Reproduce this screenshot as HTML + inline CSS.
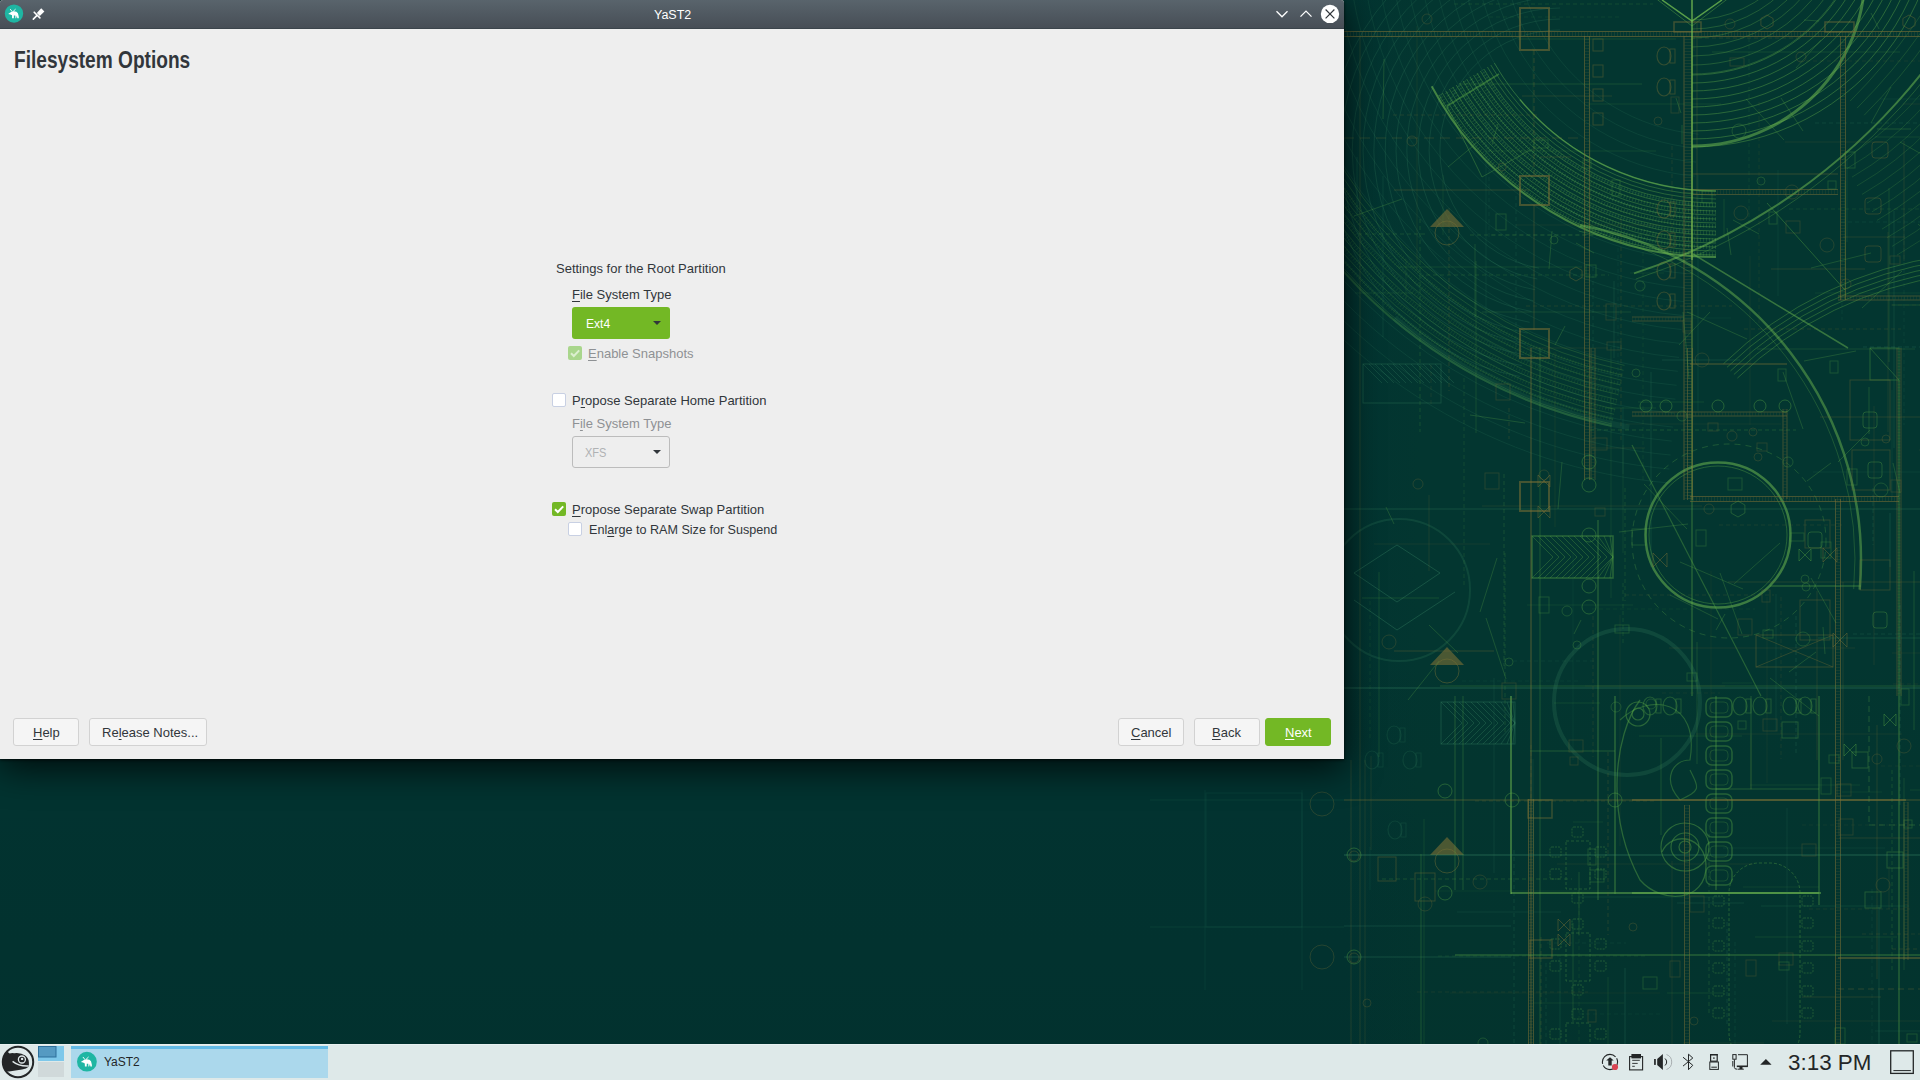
<!DOCTYPE html>
<html><head><meta charset="utf-8">
<style>
html,body{margin:0;padding:0;width:1920px;height:1080px;overflow:hidden;background:#02302c;font-family:"Liberation Sans",sans-serif;}
.abs{position:absolute;}
#desk{position:absolute;left:0;top:0;width:1920px;height:1080px;background:linear-gradient(180deg,rgba(0,0,0,0) 0px,rgba(0,0,0,0) 600px,rgba(0,8,6,0.06) 1044px),linear-gradient(90deg,#023431 0px,#023431 1344px,#033630 1420px,#033630 1920px);}
#win{position:absolute;left:0;top:0;width:1344px;height:759px;background:#eeeeee;border-top-right-radius:3px;border-top-left-radius:3px;box-shadow:0 1px 3px rgba(0,0,0,0.7),0 8px 36px rgba(0,0,0,0.8);}
#tb{position:absolute;left:0;top:0;width:1344px;height:28px;background:linear-gradient(#59646c,#474e56);border-top-right-radius:3px;border-top-left-radius:3px;border-bottom:1px solid #3b444b;}
.t{position:absolute;white-space:nowrap;font-size:13px;line-height:16px;color:#31363b;}
.dis{color:#8e9194;}
#win > .t{margin-top:1px;}
#tb .t{margin-top:1px;}
u{text-decoration:underline;text-underline-offset:2px;text-decoration-thickness:1px;}
.btn{position:absolute;top:718px;height:26px;background:#f5f5f5;border:1px solid #d2d2d2;border-radius:3px;}
.cb{position:absolute;width:12px;height:12px;border:1px solid #c8d0e3;border-radius:2px;background:#fff;}
</style></head><body>
<div id="desk"><svg width="1920" height="1044" viewBox="0 0 1920 1044" style="position:absolute;left:0;top:0"><path d="M1539.2 268.2A120 120 0 0 1 1560.0 30.0" fill="none" stroke="#3b8a66" stroke-width="1" opacity="0.22"/><path d="M1537.3 279.0A131 131 0 0 1 1560.0 19.0" fill="none" stroke="#3b8a66" stroke-width="1" opacity="0.22"/><path d="M1535.3 289.8A142 142 0 0 1 1560.0 8.0" fill="none" stroke="#3b8a66" stroke-width="1" opacity="0.22"/><path d="M1533.4 300.7A153 153 0 0 1 1560.0 -3.0" fill="none" stroke="#3b8a66" stroke-width="1" opacity="0.22"/><path d="M1531.5 311.5A164 164 0 0 1 1560.0 -14.0" fill="none" stroke="#3b8a66" stroke-width="1" opacity="0.22"/><path d="M1529.6 322.3A175 175 0 0 1 1560.0 -25.0" fill="none" stroke="#3b8a66" stroke-width="1" opacity="0.22"/><path d="M1527.7 333.2A186 186 0 0 1 1560.0 -36.0" fill="none" stroke="#3b8a66" stroke-width="1" opacity="0.22"/><path d="M1525.8 344.0A197 197 0 0 1 1560.0 -47.0" fill="none" stroke="#3b8a66" stroke-width="1" opacity="0.22"/><path d="M1523.9 354.8A208 208 0 0 1 1560.0 -58.0" fill="none" stroke="#3b8a66" stroke-width="1" opacity="0.22"/><path d="M1522.0 365.7A219 219 0 0 1 1560.0 -69.0" fill="none" stroke="#3b8a66" stroke-width="1" opacity="0.22"/><path d="M1520.1 376.5A230 230 0 0 1 1560.0 -80.0" fill="none" stroke="#3b8a66" stroke-width="1" opacity="0.22"/><path d="M1698.6 134.2A200 200 0 0 1 1528.1 -133.4" fill="none" stroke="#3b8a66" stroke-width="1" opacity="0.16"/><path d="M1697.3 148.2A214 214 0 0 1 1514.9 -138.2" fill="none" stroke="#3b8a66" stroke-width="1" opacity="0.16"/><path d="M1696.1 162.1A228 228 0 0 1 1501.8 -143.0" fill="none" stroke="#3b8a66" stroke-width="1" opacity="0.16"/><path d="M1694.9 176.1A242 242 0 0 1 1488.6 -147.8" fill="none" stroke="#3b8a66" stroke-width="1" opacity="0.16"/><path d="M1693.7 190.0A256 256 0 0 1 1475.4 -152.6" fill="none" stroke="#3b8a66" stroke-width="1" opacity="0.16"/><path d="M1692.5 204.0A270 270 0 0 1 1462.3 -157.3" fill="none" stroke="#3b8a66" stroke-width="1" opacity="0.16"/><path d="M1691.2 217.9A284 284 0 0 1 1449.1 -162.1" fill="none" stroke="#3b8a66" stroke-width="1" opacity="0.16"/><path d="M1690.0 231.9A298 298 0 0 1 1436.0 -166.9" fill="none" stroke="#3b8a66" stroke-width="1" opacity="0.16"/><path d="M1688.8 245.8A312 312 0 0 1 1422.8 -171.7" fill="none" stroke="#3b8a66" stroke-width="1" opacity="0.16"/><path d="M1687.6 259.8A326 326 0 0 1 1409.7 -176.5" fill="none" stroke="#3b8a66" stroke-width="1" opacity="0.16"/><path d="M1686.4 273.7A340 340 0 0 1 1396.5 -181.3" fill="none" stroke="#3b8a66" stroke-width="1" opacity="0.16"/><path d="M1685.1 287.7A354 354 0 0 1 1383.3 -186.1" fill="none" stroke="#3b8a66" stroke-width="1" opacity="0.16"/><path d="M1683.9 301.6A368 368 0 0 1 1370.2 -190.9" fill="none" stroke="#3b8a66" stroke-width="1" opacity="0.16"/><path d="M1682.7 315.5A382 382 0 0 1 1357.0 -195.7" fill="none" stroke="#3b8a66" stroke-width="1" opacity="0.16"/><path d="M1681.5 329.5A396 396 0 0 1 1343.9 -200.4" fill="none" stroke="#3b8a66" stroke-width="1" opacity="0.16"/><path d="M1680.3 343.4A410 410 0 0 1 1330.7 -205.2" fill="none" stroke="#3b8a66" stroke-width="1" opacity="0.16"/><path d="M1679.0 357.4A424 424 0 0 1 1317.6 -210.0" fill="none" stroke="#3b8a66" stroke-width="1" opacity="0.16"/><path d="M1677.8 371.3A438 438 0 0 1 1304.4 -214.8" fill="none" stroke="#3b8a66" stroke-width="1" opacity="0.16"/><path d="M1676.6 385.3A452 452 0 0 1 1291.3 -219.6" fill="none" stroke="#3b8a66" stroke-width="1" opacity="0.16"/><path d="M1675.4 399.2A466 466 0 0 1 1278.1 -224.4" fill="none" stroke="#3b8a66" stroke-width="1" opacity="0.16"/><path d="M1674.2 413.2A480 480 0 0 1 1264.9 -229.2" fill="none" stroke="#3b8a66" stroke-width="1" opacity="0.16"/><path d="M1672.9 427.1A494 494 0 0 1 1251.8 -234.0" fill="none" stroke="#3b8a66" stroke-width="1" opacity="0.16"/><path d="M1671.7 441.1A508 508 0 0 1 1238.6 -238.7" fill="none" stroke="#3b8a66" stroke-width="1" opacity="0.16"/><path d="M1670.5 455.0A522 522 0 0 1 1225.5 -243.5" fill="none" stroke="#3b8a66" stroke-width="1" opacity="0.16"/><path d="M1669.3 469.0A536 536 0 0 1 1212.3 -248.3" fill="none" stroke="#3b8a66" stroke-width="1" opacity="0.16"/><path d="M1668.1 482.9A550 550 0 0 1 1199.2 -253.1" fill="none" stroke="#3b8a66" stroke-width="1" opacity="0.16"/><path d="M1716.0 191.0A256 256 0 0 1 1494.3 63.0" fill="none" stroke="#58a444" stroke-width="1" opacity="0.42"/><path d="M1716.0 195.0A260 260 0 0 1 1490.8 65.0" fill="none" stroke="#58a444" stroke-width="1" opacity="0.42"/><path d="M1716.0 199.0A264 264 0 0 1 1487.4 67.0" fill="none" stroke="#58a444" stroke-width="1" opacity="0.42"/><path d="M1716.0 203.0A268 268 0 0 1 1483.9 69.0" fill="none" stroke="#58a444" stroke-width="1" opacity="0.42"/><path d="M1716.0 207.0A272 272 0 0 1 1480.4 71.0" fill="none" stroke="#58a444" stroke-width="1" opacity="0.42"/><path d="M1716.0 211.0A276 276 0 0 1 1477.0 73.0" fill="none" stroke="#58a444" stroke-width="1" opacity="0.42"/><path d="M1716.0 215.0A280 280 0 0 1 1473.5 75.0" fill="none" stroke="#58a444" stroke-width="1" opacity="0.42"/><path d="M1716.0 219.0A284 284 0 0 1 1470.0 77.0" fill="none" stroke="#58a444" stroke-width="1" opacity="0.42"/><path d="M1716.0 223.0A288 288 0 0 1 1466.6 79.0" fill="none" stroke="#58a444" stroke-width="1" opacity="0.42"/><path d="M1716.0 227.0A292 292 0 0 1 1463.1 81.0" fill="none" stroke="#58a444" stroke-width="1" opacity="0.42"/><path d="M1716.0 231.0A296 296 0 0 1 1459.7 83.0" fill="none" stroke="#58a444" stroke-width="1" opacity="0.42"/><path d="M1716.0 235.0A300 300 0 0 1 1456.2 85.0" fill="none" stroke="#58a444" stroke-width="1" opacity="0.42"/><path d="M1716.0 239.0A304 304 0 0 1 1452.7 87.0" fill="none" stroke="#58a444" stroke-width="1" opacity="0.42"/><path d="M1716.0 243.0A308 308 0 0 1 1449.3 89.0" fill="none" stroke="#58a444" stroke-width="1" opacity="0.42"/><path d="M1716.0 247.0A312 312 0 0 1 1445.8 91.0" fill="none" stroke="#58a444" stroke-width="1" opacity="0.42"/><path d="M1716.0 251.0A316 316 0 0 1 1442.3 93.0" fill="none" stroke="#58a444" stroke-width="1" opacity="0.42"/><path d="M1716.0 255.0A320 320 0 0 1 1438.9 95.0" fill="none" stroke="#58a444" stroke-width="1" opacity="0.42"/><path d="M1716.0 257.0A322 322 0 0 1 1431.7 86.2" fill="none" stroke="#76c152" stroke-width="2" opacity="0.55"/><path d="M1716.0 191.0A256 256 0 0 1 1519.9 99.6" fill="none" stroke="#76c152" stroke-width="1.5" opacity="0.45"/><path d="M1716.0 205.0A270 270 0 0 1 1482.2 70.0" fill="none" stroke="#76c152" stroke-width="4" opacity="0.18" stroke-dasharray="1 2"/><path d="M1716.0 212.0A277 277 0 0 1 1476.1 73.5" fill="none" stroke="#76c152" stroke-width="4" opacity="0.18" stroke-dasharray="1 2"/><path d="M1716.0 219.0A284 284 0 0 1 1470.0 77.0" fill="none" stroke="#76c152" stroke-width="4" opacity="0.18" stroke-dasharray="1 2"/><path d="M1716.0 226.0A291 291 0 0 1 1464.0 80.5" fill="none" stroke="#76c152" stroke-width="4" opacity="0.18" stroke-dasharray="1 2"/><path d="M1716.0 233.0A298 298 0 0 1 1457.9 84.0" fill="none" stroke="#76c152" stroke-width="4" opacity="0.18" stroke-dasharray="1 2"/><path d="M1716.0 240.0A305 305 0 0 1 1451.9 87.5" fill="none" stroke="#76c152" stroke-width="4" opacity="0.18" stroke-dasharray="1 2"/><path d="M1716.0 247.0A312 312 0 0 1 1445.8 91.0" fill="none" stroke="#76c152" stroke-width="4" opacity="0.18" stroke-dasharray="1 2"/><path d="M1716.0 254.0A319 319 0 0 1 1439.7 94.5" fill="none" stroke="#76c152" stroke-width="4" opacity="0.18" stroke-dasharray="1 2"/><path d="M1447 106L1499 74" fill="none" stroke="#58a444" stroke-width="1.5" opacity="0.5"/><path d="M1447 106L1482 177" fill="none" stroke="#58a444" stroke-width="1" opacity="0.4"/><path d="M1482 177L1530 150" fill="none" stroke="#58a444" stroke-width="1" opacity="0.35"/><path d="M1624.5 365.4A440 440 0 0 1 1285.6 26.5" fill="none" stroke="#58a444" stroke-width="1" opacity="0.25"/><path d="M1623.5 370.3A445 445 0 0 1 1280.7 27.5" fill="none" stroke="#58a444" stroke-width="1" opacity="0.25"/><path d="M1622.4 375.2A450 450 0 0 1 1275.8 28.6" fill="none" stroke="#58a444" stroke-width="1" opacity="0.25"/><path d="M1621.4 380.1A455 455 0 0 1 1270.9 29.6" fill="none" stroke="#58a444" stroke-width="1" opacity="0.25"/><path d="M1620.4 384.9A460 460 0 0 1 1266.1 30.6" fill="none" stroke="#58a444" stroke-width="1" opacity="0.25"/><path d="M1619.3 389.8A465 465 0 0 1 1261.2 31.7" fill="none" stroke="#58a444" stroke-width="1" opacity="0.25"/><path d="M1618.3 394.7A470 470 0 0 1 1256.3 32.7" fill="none" stroke="#58a444" stroke-width="1" opacity="0.25"/><path d="M1617.2 399.6A475 475 0 0 1 1251.4 33.8" fill="none" stroke="#58a444" stroke-width="1" opacity="0.25"/><path d="M1616.2 404.5A480 480 0 0 1 1246.5 34.8" fill="none" stroke="#58a444" stroke-width="1" opacity="0.25"/><path d="M1615.2 409.4A485 485 0 0 1 1241.6 35.8" fill="none" stroke="#58a444" stroke-width="1" opacity="0.25"/><path d="M1614.1 414.3A490 490 0 0 1 1236.7 36.9" fill="none" stroke="#58a444" stroke-width="1" opacity="0.25"/><path d="M1613.1 419.2A495 495 0 0 1 1231.8 37.9" fill="none" stroke="#58a444" stroke-width="1" opacity="0.25"/><path d="M1612.0 424.1A500 500 0 0 1 1226.9 39.0" fill="none" stroke="#58a444" stroke-width="1" opacity="0.25"/><path d="M1611.6 426.0A502 502 0 0 1 1225.0 39.4" fill="none" stroke="#58a444" stroke-width="2" opacity="0.3"/><path d="M1622.4 375.2A450 450 0 0 1 1275.8 28.6" fill="none" stroke="#58a444" stroke-width="4" opacity="0.12" stroke-dasharray="1 2"/><path d="M1620.6 384.0A459 459 0 0 1 1267.0 30.4" fill="none" stroke="#58a444" stroke-width="4" opacity="0.12" stroke-dasharray="1 2"/><path d="M1618.7 392.8A468 468 0 0 1 1258.2 32.3" fill="none" stroke="#58a444" stroke-width="4" opacity="0.12" stroke-dasharray="1 2"/><path d="M1616.8 401.6A477 477 0 0 1 1249.4 34.2" fill="none" stroke="#58a444" stroke-width="4" opacity="0.12" stroke-dasharray="1 2"/><path d="M1615.0 410.4A486 486 0 0 1 1240.6 36.0" fill="none" stroke="#58a444" stroke-width="4" opacity="0.12" stroke-dasharray="1 2"/><path d="M1613.1 419.2A495 495 0 0 1 1231.8 37.9" fill="none" stroke="#58a444" stroke-width="4" opacity="0.12" stroke-dasharray="1 2"/><path d="M1856.4 -159.9A175 175 0 0 1 1692.0 75.0" fill="none" stroke="#58a444" stroke-width="1" opacity="0.45"/><path d="M1864.0 -162.6A183 183 0 0 1 1692.0 83.0" fill="none" stroke="#58a444" stroke-width="1" opacity="0.45"/><path d="M1871.5 -165.3A191 191 0 0 1 1692.0 91.0" fill="none" stroke="#58a444" stroke-width="1" opacity="0.45"/><path d="M1879.0 -168.1A199 199 0 0 1 1692.0 99.0" fill="none" stroke="#58a444" stroke-width="1" opacity="0.45"/><path d="M1886.5 -170.8A207 207 0 0 1 1692.0 107.0" fill="none" stroke="#58a444" stroke-width="1" opacity="0.45"/><path d="M1894.0 -173.5A215 215 0 0 1 1692.0 115.0" fill="none" stroke="#58a444" stroke-width="1" opacity="0.45"/><path d="M1901.6 -176.3A223 223 0 0 1 1692.0 123.0" fill="none" stroke="#58a444" stroke-width="1" opacity="0.45"/><path d="M1909.1 -179.0A231 231 0 0 1 1692.0 131.0" fill="none" stroke="#58a444" stroke-width="1" opacity="0.45"/><path d="M1916.6 -181.7A239 239 0 0 1 1692.0 139.0" fill="none" stroke="#58a444" stroke-width="1" opacity="0.45"/><path d="M1924.1 -184.5A247 247 0 0 1 1692.0 147.0" fill="none" stroke="#58a444" stroke-width="1" opacity="0.45"/><path d="M1810.2 -120.8A120 120 0 0 1 1692.0 20.0" fill="none" stroke="#58a444" stroke-width="1" opacity="0.35"/><path d="M1819.0 -122.4A129 129 0 0 1 1692.0 29.0" fill="none" stroke="#58a444" stroke-width="1" opacity="0.35"/><path d="M1827.9 -124.0A138 138 0 0 1 1692.0 38.0" fill="none" stroke="#58a444" stroke-width="1" opacity="0.35"/><path d="M1836.8 -125.5A147 147 0 0 1 1692.0 47.0" fill="none" stroke="#58a444" stroke-width="1" opacity="0.35"/><path d="M1845.6 -127.1A156 156 0 0 1 1692.0 56.0" fill="none" stroke="#58a444" stroke-width="1" opacity="0.35"/><path d="M1854.5 -128.7A165 165 0 0 1 1692.0 65.0" fill="none" stroke="#58a444" stroke-width="1" opacity="0.35"/><path d="M1863.4 -130.2A174 174 0 0 1 1692.0 74.0" fill="none" stroke="#58a444" stroke-width="1" opacity="0.35"/><path d="M1990.9 -126.1A300 300 0 0 1 1842.0 159.8" fill="none" stroke="#58a444" stroke-width="1" opacity="0.22"/><path d="M2000.8 -127.0A310 310 0 0 1 1847.0 168.5" fill="none" stroke="#58a444" stroke-width="1" opacity="0.22"/><path d="M2010.8 -127.9A320 320 0 0 1 1852.0 177.1" fill="none" stroke="#58a444" stroke-width="1" opacity="0.22"/><path d="M2020.7 -128.8A330 330 0 0 1 1857.0 185.8" fill="none" stroke="#58a444" stroke-width="1" opacity="0.22"/><path d="M2030.7 -129.6A340 340 0 0 1 1862.0 194.4" fill="none" stroke="#58a444" stroke-width="1" opacity="0.22"/><path d="M2040.7 -130.5A350 350 0 0 1 1867.0 203.1" fill="none" stroke="#58a444" stroke-width="1" opacity="0.22"/><path d="M2050.6 -131.4A360 360 0 0 1 1872.0 211.8" fill="none" stroke="#58a444" stroke-width="1" opacity="0.22"/><path d="M2060.6 -132.2A370 370 0 0 1 1877.0 220.4" fill="none" stroke="#58a444" stroke-width="1" opacity="0.22"/><path d="M2070.6 -133.1A380 380 0 0 1 1882.0 229.1" fill="none" stroke="#58a444" stroke-width="1" opacity="0.22"/><path d="M2080.5 -134.0A390 390 0 0 1 1887.0 237.7" fill="none" stroke="#58a444" stroke-width="1" opacity="0.22"/><path d="M2090.5 -134.9A400 400 0 0 1 1892.0 246.4" fill="none" stroke="#58a444" stroke-width="1" opacity="0.22"/><path d="M2100.4 -135.7A410 410 0 0 1 1897.0 255.1" fill="none" stroke="#58a444" stroke-width="1" opacity="0.22"/><path d="M1854.6 -86.2A173 173 0 0 1 1692.0 146.0" fill="none" stroke="#76c152" stroke-width="3" opacity="0.5"/><path d="M2038.8 -176.2A605 605 0 0 1 1634.0 273.4" fill="none" stroke="#76c152" stroke-width="2" opacity="0.5"/><path d="M2044.6 -175.0A611 611 0 0 1 1635.8 279.1" fill="none" stroke="#58a444" stroke-width="1" opacity="0.35"/><path d="M1963.6 -61.1A570 570 0 0 1 1850.1 101.1" fill="none" stroke="#58a444" stroke-width="1" opacity="0.25"/><path d="M1972.7 -56.9A580 580 0 0 1 1857.1 108.1" fill="none" stroke="#58a444" stroke-width="1" opacity="0.25"/><path d="M1981.7 -52.7A590 590 0 0 1 1864.2 115.2" fill="none" stroke="#58a444" stroke-width="1" opacity="0.25"/><path d="M1737.4 378.1A378 378 0 0 1 1947.4 275.7" fill="none" stroke="#58a444" stroke-width="1" opacity="0.4"/><path d="M1733.9 374.5A383 383 0 0 1 1946.7 270.7" fill="none" stroke="#58a444" stroke-width="1" opacity="0.4"/><path d="M1730.5 370.9A388 388 0 0 1 1946.0 265.8" fill="none" stroke="#58a444" stroke-width="1" opacity="0.4"/><path d="M1727.0 367.3A393 393 0 0 1 1945.3 260.8" fill="none" stroke="#58a444" stroke-width="1" opacity="0.4"/><path d="M1723.5 363.7A398 398 0 0 1 1944.6 255.9" fill="none" stroke="#58a444" stroke-width="1" opacity="0.4"/><path d="M1693 254L1848 348" fill="none" stroke="#76c152" stroke-width="1.5" opacity="0.45"/><path d="M1767 203L1845 290" fill="none" stroke="#58a444" stroke-width="1" opacity="0.4"/><path d="M1662 0L1692 21L1722 0" fill="none" stroke="#76c152" stroke-width="1.5" opacity="0.75"/><path d="M1650 -6L1692 26L1734 -6" fill="none" stroke="#58a444" stroke-width="1" opacity="0.45"/><rect x="1674" y="22" width="27" height="10" fill="none" stroke="#7b7035" stroke-width="1.5" opacity="0.5"/><rect x="1825" y="22" width="29" height="10" fill="none" stroke="#7b7035" stroke-width="1.5" opacity="0.5"/><polygon points="1773.1,25.5 1767.0,29.0 1760.9,25.5 1760.9,18.5 1767.0,15.0 1773.1,18.5" fill="none" stroke="#7b7035" stroke-width="1" opacity="0.4"/><polygon points="1915.1,25.5 1909.0,29.0 1902.9,25.5 1902.9,18.5 1909.0,15.0 1915.1,18.5" fill="none" stroke="#7b7035" stroke-width="1" opacity="0.4"/><polygon points="1582.1,277.5 1576.0,281.0 1569.9,277.5 1569.9,270.5 1576.0,267.0 1582.1,270.5" fill="none" stroke="#7b7035" stroke-width="1" opacity="0.4"/><path d="M1344 31.5L1920 31.5" fill="none" stroke="#7b7035" stroke-width="1" opacity="0.6"/><path d="M1344 36.5L1920 36.5" fill="none" stroke="#7b7035" stroke-width="1" opacity="0.6"/><path d="M1344 34L1920 34" fill="none" stroke="#7b7035" stroke-width="4" opacity="0.18" stroke-dasharray="1 2"/><path d="M1684.0 36L1684.0 500" fill="none" stroke="#7b7035" stroke-width="1" opacity="0.6"/><path d="M1692.0 36L1692.0 500" fill="none" stroke="#7b7035" stroke-width="1" opacity="0.6"/><path d="M1688 36L1688 500" fill="none" stroke="#7b7035" stroke-width="7" opacity="0.18" stroke-dasharray="1 2"/><path d="M1692 0L1692 260" fill="none" stroke="#76c152" stroke-width="2" opacity="0.6"/><path d="M1692 260L1692 696" fill="none" stroke="#58a444" stroke-width="1.5" opacity="0.4"/><path d="M1840.5 36L1840.5 300" fill="none" stroke="#7b7035" stroke-width="1" opacity="0.55"/><path d="M1845.5 36L1845.5 300" fill="none" stroke="#7b7035" stroke-width="1" opacity="0.55"/><path d="M1843 36L1843 300" fill="none" stroke="#7b7035" stroke-width="4" opacity="0.165" stroke-dasharray="1 2"/><path d="M1693 189.5L1838 189.5" fill="none" stroke="#7b7035" stroke-width="1" opacity="0.5"/><path d="M1693 194.5L1838 194.5" fill="none" stroke="#7b7035" stroke-width="1" opacity="0.5"/><path d="M1693 192L1838 192" fill="none" stroke="#7b7035" stroke-width="4" opacity="0.15" stroke-dasharray="1 2"/><path d="M1693 174L1838 174" fill="none" stroke="#7b7035" stroke-width="1" opacity="0.4"/><path d="M1838 296.0L1920 296.0" fill="none" stroke="#7b7035" stroke-width="1" opacity="0.5"/><path d="M1838 300.0L1920 300.0" fill="none" stroke="#7b7035" stroke-width="1" opacity="0.5"/><path d="M1838 298L1920 298" fill="none" stroke="#7b7035" stroke-width="3" opacity="0.15" stroke-dasharray="1 2"/><path d="M1632 317.0L1683 317.0" fill="none" stroke="#7b7035" stroke-width="1" opacity="0.45"/><path d="M1632 321.0L1683 321.0" fill="none" stroke="#7b7035" stroke-width="1" opacity="0.45"/><path d="M1632 319L1683 319" fill="none" stroke="#7b7035" stroke-width="3" opacity="0.135" stroke-dasharray="1 2"/><path d="M1584.5 36L1584.5 480" fill="none" stroke="#7b7035" stroke-width="1" opacity="0.55"/><path d="M1589.5 36L1589.5 480" fill="none" stroke="#7b7035" stroke-width="1" opacity="0.55"/><path d="M1587 36L1587 480" fill="none" stroke="#7b7035" stroke-width="4" opacity="0.165" stroke-dasharray="1 2"/><path d="M1534 50L1534 175" fill="none" stroke="#7b7035" stroke-width="1" opacity="0.35" stroke-dasharray="5 3"/><path d="M1534 205L1534 330" fill="none" stroke="#7b7035" stroke-width="1" opacity="0.35"/><path d="M1360 36L1360 1044" fill="none" stroke="#7b7035" stroke-width="1" opacity="0.25"/><path d="M1344 138L1580 138" fill="none" stroke="#7b7035" stroke-width="1" opacity="0.3" stroke-dasharray="10 6"/><path d="M1394 190L1530 190" fill="none" stroke="#7b7035" stroke-width="1" opacity="0.35"/><rect x="1520" y="8" width="29" height="42" fill="none" stroke="#7b7035" stroke-width="2" opacity="0.55"/><rect x="1520" y="176" width="29" height="29" fill="none" stroke="#7b7035" stroke-width="2" opacity="0.55"/><rect x="1520" y="329" width="29" height="29" fill="none" stroke="#7b7035" stroke-width="2" opacity="0.55"/><rect x="1520" y="482" width="29" height="29" fill="none" stroke="#7b7035" stroke-width="2" opacity="0.55"/><rect x="1593" y="39" width="10" height="12" fill="none" stroke="#7b7035" stroke-width="1" opacity="0.4"/><rect x="1593" y="65" width="10" height="12" fill="none" stroke="#7b7035" stroke-width="1" opacity="0.4"/><rect x="1593" y="89" width="10" height="12" fill="none" stroke="#7b7035" stroke-width="1" opacity="0.4"/><rect x="1593" y="113" width="10" height="12" fill="none" stroke="#7b7035" stroke-width="1" opacity="0.4"/><ellipse cx="1664" cy="56" rx="7" ry="9" fill="none" stroke="#7b7035" stroke-width="1.2" opacity="0.4"/><rect x="1670" y="49" width="5" height="14" fill="none" stroke="#7b7035" stroke-width="1" opacity="0.4"/><ellipse cx="1664" cy="87" rx="7" ry="9" fill="none" stroke="#7b7035" stroke-width="1.2" opacity="0.4"/><rect x="1670" y="80" width="5" height="14" fill="none" stroke="#7b7035" stroke-width="1" opacity="0.4"/><ellipse cx="1664" cy="209" rx="7" ry="9" fill="none" stroke="#7b7035" stroke-width="1.2" opacity="0.4"/><rect x="1670" y="202" width="5" height="14" fill="none" stroke="#7b7035" stroke-width="1" opacity="0.4"/><ellipse cx="1664" cy="240" rx="7" ry="9" fill="none" stroke="#7b7035" stroke-width="1.2" opacity="0.4"/><rect x="1670" y="233" width="5" height="14" fill="none" stroke="#7b7035" stroke-width="1" opacity="0.4"/><ellipse cx="1664" cy="271" rx="7" ry="9" fill="none" stroke="#7b7035" stroke-width="1.2" opacity="0.4"/><rect x="1670" y="264" width="5" height="14" fill="none" stroke="#7b7035" stroke-width="1" opacity="0.4"/><ellipse cx="1664" cy="301" rx="7" ry="9" fill="none" stroke="#7b7035" stroke-width="1.2" opacity="0.4"/><rect x="1670" y="294" width="5" height="14" fill="none" stroke="#7b7035" stroke-width="1" opacity="0.4"/><rect x="1865" y="198" width="16" height="16" rx="3" fill="none" stroke="#7b7035" stroke-width="1" opacity="0.35"/><rect x="1865" y="246" width="16" height="16" rx="3" fill="none" stroke="#7b7035" stroke-width="1" opacity="0.35"/><rect x="1872" y="142" width="16" height="16" rx="3" fill="none" stroke="#7b7035" stroke-width="1" opacity="0.35"/><circle cx="1718" cy="535" r="72.5" fill="none" stroke="#76c152" stroke-width="2.5" opacity="0.5"/><circle cx="1718" cy="535" r="69" fill="none" stroke="#58a444" stroke-width="1" opacity="0.4"/><circle cx="1729" cy="541" r="97" fill="none" stroke="#58a444" stroke-width="1" opacity="0.3" stroke-dasharray="6 5"/><path d="M1580.0 225.2A340 340 0 0 1 1859.7 589.6" fill="none" stroke="#76c152" stroke-width="2.5" opacity="0.45"/><path d="M1579.0 231.1A334 334 0 0 1 1853.7 589.1" fill="none" stroke="#58a444" stroke-width="1" opacity="0.3"/><path d="M1632 445L1761 696" fill="none" stroke="#58a444" stroke-width="1.2" opacity="0.4"/><path d="M1687.5 348L1687.5 500" fill="none" stroke="#7b7035" stroke-width="1" opacity="0.5"/><path d="M1692.5 348L1692.5 500" fill="none" stroke="#7b7035" stroke-width="1" opacity="0.5"/><path d="M1690 348L1690 500" fill="none" stroke="#7b7035" stroke-width="4" opacity="0.15" stroke-dasharray="1 2"/><path d="M1690 496.5L1899 496.5" fill="none" stroke="#7b7035" stroke-width="1" opacity="0.55"/><path d="M1690 501.5L1899 501.5" fill="none" stroke="#7b7035" stroke-width="1" opacity="0.55"/><path d="M1690 499L1899 499" fill="none" stroke="#7b7035" stroke-width="4" opacity="0.165" stroke-dasharray="1 2"/><path d="M1783.0 409L1783.0 499" fill="none" stroke="#7b7035" stroke-width="1" opacity="0.5"/><path d="M1787.0 409L1787.0 499" fill="none" stroke="#7b7035" stroke-width="1" opacity="0.5"/><path d="M1785 409L1785 499" fill="none" stroke="#7b7035" stroke-width="3" opacity="0.15" stroke-dasharray="1 2"/><path d="M1632 412.0L1787 412.0" fill="none" stroke="#7b7035" stroke-width="1" opacity="0.5"/><path d="M1632 416.0L1787 416.0" fill="none" stroke="#7b7035" stroke-width="1" opacity="0.5"/><path d="M1632 414L1787 414" fill="none" stroke="#7b7035" stroke-width="3" opacity="0.15" stroke-dasharray="1 2"/><path d="M1690 364L1787 364" fill="none" stroke="#7b7035" stroke-width="1.5" opacity="0.45"/><path d="M1835.5 499L1835.5 1044" fill="none" stroke="#7b7035" stroke-width="1" opacity="0.55"/><path d="M1840.5 499L1840.5 1044" fill="none" stroke="#7b7035" stroke-width="1" opacity="0.55"/><path d="M1838 499L1838 1044" fill="none" stroke="#7b7035" stroke-width="4" opacity="0.165" stroke-dasharray="1 2"/><path d="M1899 380L1899 1044" fill="none" stroke="#58a444" stroke-width="1.5" opacity="0.4"/><path d="M1770 586L1861 586" fill="none" stroke="#58a444" stroke-width="1.5" opacity="0.4"/><path d="M1344 688L1920 688" fill="none" stroke="#3b8a66" stroke-width="1.5" opacity="0.3"/><rect x="1756" y="635" width="77" height="32" fill="none" stroke="#7b7035" stroke-width="1" opacity="0.4"/><path d="M1756 635L1833 667" fill="none" stroke="#7b7035" stroke-width="1" opacity="0.35"/><path d="M1756 667L1833 635" fill="none" stroke="#7b7035" stroke-width="1" opacity="0.35"/><rect x="1870" y="348" width="29" height="32" fill="none" stroke="#58a444" stroke-width="1" opacity="0.4"/><path d="M1870 348L1899 380" fill="none" stroke="#58a444" stroke-width="1" opacity="0.35"/><circle cx="1646" cy="406" r="6" fill="none" stroke="#58a444" stroke-width="1" opacity="0.4"/><circle cx="1666" cy="406" r="6" fill="none" stroke="#58a444" stroke-width="1" opacity="0.4"/><circle cx="1718" cy="406" r="6" fill="none" stroke="#58a444" stroke-width="1" opacity="0.4"/><circle cx="1760" cy="406" r="6" fill="none" stroke="#58a444" stroke-width="1" opacity="0.4"/><circle cx="1785" cy="406" r="6" fill="none" stroke="#58a444" stroke-width="1" opacity="0.4"/><polygon points="1744.9,513.0 1738.0,517.0 1731.1,513.0 1731.1,505.0 1738.0,501.0 1744.9,505.0" fill="none" stroke="#58a444" stroke-width="1" opacity="0.35"/><path d="M1823 548L1837 562L1837 548L1823 562Z" fill="none" stroke="#7b7035" stroke-width="1" opacity="0.45"/><path d="M1653 553L1667 567L1667 553L1653 567Z" fill="none" stroke="#7b7035" stroke-width="1" opacity="0.45"/><path d="M1833 633L1847 647L1847 633L1833 647Z" fill="none" stroke="#7b7035" stroke-width="1" opacity="0.45"/><path d="M1897.0 348L1897.0 696" fill="none" stroke="#7b7035" stroke-width="1" opacity="0.45"/><path d="M1901.0 348L1901.0 696" fill="none" stroke="#7b7035" stroke-width="1" opacity="0.45"/><path d="M1899 348L1899 696" fill="none" stroke="#7b7035" stroke-width="3" opacity="0.135" stroke-dasharray="1 2"/><rect x="1850" y="380" width="40" height="60" fill="none" stroke="#7b7035" stroke-width="1" opacity="0.35"/><rect x="1852" y="450" width="38" height="40" fill="none" stroke="#7b7035" stroke-width="1" opacity="0.35"/><rect x="1800" y="600" width="30" height="40" fill="none" stroke="#7b7035" stroke-width="1" opacity="0.35"/><rect x="1860" y="560" width="30" height="30" fill="none" stroke="#7b7035" stroke-width="1" opacity="0.35"/><rect x="1805" y="520" width="25" height="28" fill="none" stroke="#7b7035" stroke-width="1" opacity="0.35"/><rect x="1863" y="412" width="14" height="16" rx="3" fill="none" stroke="#58a444" stroke-width="1" opacity="0.35"/><rect x="1868" y="462" width="14" height="16" rx="3" fill="none" stroke="#58a444" stroke-width="1" opacity="0.35"/><rect x="1808" y="532" width="14" height="16" rx="3" fill="none" stroke="#58a444" stroke-width="1" opacity="0.35"/><rect x="1873" y="612" width="14" height="16" rx="3" fill="none" stroke="#58a444" stroke-width="1" opacity="0.35"/><rect x="1363" y="364" width="78" height="39" fill="none" stroke="#3b8a66" stroke-width="1" opacity="0.3"/><path d="M1363 364L1382 383" fill="none" stroke="#3b8a66" stroke-width="1" opacity="0.25"/><path d="M1369 364L1388 383" fill="none" stroke="#3b8a66" stroke-width="1" opacity="0.25"/><path d="M1375 364L1394 383" fill="none" stroke="#3b8a66" stroke-width="1" opacity="0.25"/><path d="M1381 364L1400 383" fill="none" stroke="#3b8a66" stroke-width="1" opacity="0.25"/><path d="M1387 364L1406 383" fill="none" stroke="#3b8a66" stroke-width="1" opacity="0.25"/><path d="M1393 364L1412 383" fill="none" stroke="#3b8a66" stroke-width="1" opacity="0.25"/><path d="M1399 364L1418 383" fill="none" stroke="#3b8a66" stroke-width="1" opacity="0.25"/><path d="M1405 364L1424 383" fill="none" stroke="#3b8a66" stroke-width="1" opacity="0.25"/><path d="M1411 364L1430 383" fill="none" stroke="#3b8a66" stroke-width="1" opacity="0.25"/><path d="M1417 364L1436 383" fill="none" stroke="#3b8a66" stroke-width="1" opacity="0.25"/><path d="M1423 364L1442 383" fill="none" stroke="#3b8a66" stroke-width="1" opacity="0.25"/><path d="M1429 364L1448 383" fill="none" stroke="#3b8a66" stroke-width="1" opacity="0.25"/><path d="M1435 364L1454 383" fill="none" stroke="#3b8a66" stroke-width="1" opacity="0.25"/><rect x="1532" y="536" width="81" height="42" fill="none" stroke="#58a444" stroke-width="1.5" opacity="0.45"/><path d="M1532 536L1553 557" fill="none" stroke="#58a444" stroke-width="1" opacity="0.32"/><path d="M1553 557L1532 578" fill="none" stroke="#58a444" stroke-width="1" opacity="0.32"/><path d="M1538 536L1559 557" fill="none" stroke="#58a444" stroke-width="1" opacity="0.32"/><path d="M1559 557L1538 578" fill="none" stroke="#58a444" stroke-width="1" opacity="0.32"/><path d="M1544 536L1565 557" fill="none" stroke="#58a444" stroke-width="1" opacity="0.32"/><path d="M1565 557L1544 578" fill="none" stroke="#58a444" stroke-width="1" opacity="0.32"/><path d="M1550 536L1571 557" fill="none" stroke="#58a444" stroke-width="1" opacity="0.32"/><path d="M1571 557L1550 578" fill="none" stroke="#58a444" stroke-width="1" opacity="0.32"/><path d="M1556 536L1577 557" fill="none" stroke="#58a444" stroke-width="1" opacity="0.32"/><path d="M1577 557L1556 578" fill="none" stroke="#58a444" stroke-width="1" opacity="0.32"/><path d="M1562 536L1583 557" fill="none" stroke="#58a444" stroke-width="1" opacity="0.32"/><path d="M1583 557L1562 578" fill="none" stroke="#58a444" stroke-width="1" opacity="0.32"/><path d="M1568 536L1589 557" fill="none" stroke="#58a444" stroke-width="1" opacity="0.32"/><path d="M1589 557L1568 578" fill="none" stroke="#58a444" stroke-width="1" opacity="0.32"/><path d="M1574 536L1595 557" fill="none" stroke="#58a444" stroke-width="1" opacity="0.32"/><path d="M1595 557L1574 578" fill="none" stroke="#58a444" stroke-width="1" opacity="0.32"/><path d="M1580 536L1601 557" fill="none" stroke="#58a444" stroke-width="1" opacity="0.32"/><path d="M1601 557L1580 578" fill="none" stroke="#58a444" stroke-width="1" opacity="0.32"/><path d="M1586 536L1607 557" fill="none" stroke="#58a444" stroke-width="1" opacity="0.32"/><path d="M1607 557L1586 578" fill="none" stroke="#58a444" stroke-width="1" opacity="0.32"/><path d="M1592 536L1613 557" fill="none" stroke="#58a444" stroke-width="1" opacity="0.32"/><path d="M1613 557L1592 578" fill="none" stroke="#58a444" stroke-width="1" opacity="0.32"/><path d="M1598 536L1613 557" fill="none" stroke="#58a444" stroke-width="1" opacity="0.32"/><path d="M1613 557L1598 578" fill="none" stroke="#58a444" stroke-width="1" opacity="0.32"/><path d="M1604 536L1613 557" fill="none" stroke="#58a444" stroke-width="1" opacity="0.32"/><path d="M1613 557L1604 578" fill="none" stroke="#58a444" stroke-width="1" opacity="0.32"/><path d="M1610 536L1613 557" fill="none" stroke="#58a444" stroke-width="1" opacity="0.32"/><path d="M1613 557L1610 578" fill="none" stroke="#58a444" stroke-width="1" opacity="0.32"/><path d="M1397 545L1440 573L1397 602L1354 573Z" fill="none" stroke="#3b8a66" stroke-width="1" opacity="0.35"/><path d="M1354 600L1397 630L1455 592" fill="none" stroke="#3b8a66" stroke-width="1" opacity="0.35"/><circle cx="1399" cy="590" r="71" fill="none" stroke="#3b8a66" stroke-width="2" opacity="0.2"/><path d="M1629.2 427.4A500 500 0 0 1 1394.6 318.0" fill="none" stroke="#3b8a66" stroke-width="6" opacity="0.15"/><path d="M1531 348L1531 1044" fill="none" stroke="#7b7035" stroke-width="1.5" opacity="0.45"/><path d="M1540 348L1540 1044" fill="none" stroke="#58a444" stroke-width="1" opacity="0.3"/><path d="M1591.0 348L1591.0 480" fill="none" stroke="#7b7035" stroke-width="1" opacity="0.45"/><path d="M1595.0 348L1595.0 480" fill="none" stroke="#7b7035" stroke-width="1" opacity="0.45"/><path d="M1593 348L1593 480" fill="none" stroke="#7b7035" stroke-width="3" opacity="0.135" stroke-dasharray="1 2"/><path d="M1598 520L1598 900" fill="none" stroke="#58a444" stroke-width="1.5" opacity="0.35"/><path d="M1344 509L1920 509" fill="none" stroke="#3b8a66" stroke-width="1.2" opacity="0.3"/><circle cx="1589" cy="462" r="7" fill="none" stroke="#58a444" stroke-width="1" opacity="0.4"/><circle cx="1589" cy="485" r="7" fill="none" stroke="#58a444" stroke-width="1" opacity="0.4"/><circle cx="1589" cy="535" r="7" fill="none" stroke="#58a444" stroke-width="1" opacity="0.4"/><circle cx="1589" cy="586" r="7" fill="none" stroke="#58a444" stroke-width="1" opacity="0.4"/><circle cx="1589" cy="607" r="7" fill="none" stroke="#58a444" stroke-width="1" opacity="0.4"/><path d="M1430 227L1447 209L1464 227Z" fill="#7b7035" opacity="0.6"/><circle cx="1447" cy="233" r="12" fill="none" stroke="#7b7035" stroke-width="1" opacity="0.45"/><path d="M1430 665L1447 647L1464 665Z" fill="#7b7035" opacity="0.6"/><circle cx="1447" cy="671" r="12" fill="none" stroke="#7b7035" stroke-width="1" opacity="0.45"/><path d="M1430 855L1447 837L1464 855Z" fill="#7b7035" opacity="0.6"/><circle cx="1447" cy="861" r="12" fill="none" stroke="#7b7035" stroke-width="1" opacity="0.45"/><path d="M1394 651L1494 651" fill="none" stroke="#7b7035" stroke-width="1" opacity="0.35"/><path d="M1440 686L1920 686" fill="none" stroke="#58a444" stroke-width="1" opacity="0.3"/><rect x="1530" y="940" width="22" height="18" fill="none" stroke="#7b7035" stroke-width="1.5" opacity="0.4"/><rect x="1528" y="800" width="24" height="18" fill="none" stroke="#7b7035" stroke-width="1.5" opacity="0.45"/><path d="M1538 475L1550 487L1550 475L1538 487Z" fill="none" stroke="#7b7035" stroke-width="1" opacity="0.45"/><path d="M1538 506L1550 518L1550 506L1538 518Z" fill="none" stroke="#7b7035" stroke-width="1" opacity="0.45"/><path d="M1558 919L1570 931L1570 919L1558 931Z" fill="none" stroke="#7b7035" stroke-width="1" opacity="0.45"/><path d="M1558 934L1570 946L1570 934L1558 946Z" fill="none" stroke="#7b7035" stroke-width="1" opacity="0.45"/><path d="M1511 696L1511 894" fill="none" stroke="#76c152" stroke-width="2" opacity="0.45"/><path d="M1511 893L1821 893" fill="none" stroke="#76c152" stroke-width="2" opacity="0.45"/><path d="M1615 696L1615 894" fill="none" stroke="#58a444" stroke-width="1.5" opacity="0.45"/><path d="M1530 751L1615 751" fill="none" stroke="#58a444" stroke-width="1" opacity="0.35"/><path d="M1528.5 799L1528.5 1044" fill="none" stroke="#7b7035" stroke-width="1" opacity="0.55"/><path d="M1533.5 799L1533.5 1044" fill="none" stroke="#7b7035" stroke-width="1" opacity="0.55"/><path d="M1531 799L1531 1044" fill="none" stroke="#7b7035" stroke-width="4" opacity="0.165" stroke-dasharray="1 2"/><path d="M1344 800L1920 800" fill="none" stroke="#7b7035" stroke-width="1.5" opacity="0.35"/><path d="M1455 955L1920 955" fill="none" stroke="#58a444" stroke-width="1.5" opacity="0.4"/><path d="M1344 855L1920 855" fill="none" stroke="#3b8a66" stroke-width="1.5" opacity="0.35"/><path d="M1344 957L1511 957" fill="none" stroke="#3b8a66" stroke-width="1" opacity="0.3"/><path d="M1344 926L1511 926" fill="none" stroke="#3b8a66" stroke-width="1" opacity="0.25"/><rect x="1441" y="702" width="74" height="42" fill="none" stroke="#3b8a66" stroke-width="1" opacity="0.35"/><path d="M1441 702L1462 723" fill="none" stroke="#3b8a66" stroke-width="1" opacity="0.3"/><path d="M1462 723L1441 744" fill="none" stroke="#3b8a66" stroke-width="1" opacity="0.3"/><path d="M1447 702L1468 723" fill="none" stroke="#3b8a66" stroke-width="1" opacity="0.3"/><path d="M1468 723L1447 744" fill="none" stroke="#3b8a66" stroke-width="1" opacity="0.3"/><path d="M1453 702L1474 723" fill="none" stroke="#3b8a66" stroke-width="1" opacity="0.3"/><path d="M1474 723L1453 744" fill="none" stroke="#3b8a66" stroke-width="1" opacity="0.3"/><path d="M1459 702L1480 723" fill="none" stroke="#3b8a66" stroke-width="1" opacity="0.3"/><path d="M1480 723L1459 744" fill="none" stroke="#3b8a66" stroke-width="1" opacity="0.3"/><path d="M1465 702L1486 723" fill="none" stroke="#3b8a66" stroke-width="1" opacity="0.3"/><path d="M1486 723L1465 744" fill="none" stroke="#3b8a66" stroke-width="1" opacity="0.3"/><path d="M1471 702L1492 723" fill="none" stroke="#3b8a66" stroke-width="1" opacity="0.3"/><path d="M1492 723L1471 744" fill="none" stroke="#3b8a66" stroke-width="1" opacity="0.3"/><path d="M1477 702L1498 723" fill="none" stroke="#3b8a66" stroke-width="1" opacity="0.3"/><path d="M1498 723L1477 744" fill="none" stroke="#3b8a66" stroke-width="1" opacity="0.3"/><path d="M1483 702L1504 723" fill="none" stroke="#3b8a66" stroke-width="1" opacity="0.3"/><path d="M1504 723L1483 744" fill="none" stroke="#3b8a66" stroke-width="1" opacity="0.3"/><path d="M1489 702L1510 723" fill="none" stroke="#3b8a66" stroke-width="1" opacity="0.3"/><path d="M1510 723L1489 744" fill="none" stroke="#3b8a66" stroke-width="1" opacity="0.3"/><path d="M1495 702L1515 723" fill="none" stroke="#3b8a66" stroke-width="1" opacity="0.3"/><path d="M1515 723L1495 744" fill="none" stroke="#3b8a66" stroke-width="1" opacity="0.3"/><path d="M1501 702L1515 723" fill="none" stroke="#3b8a66" stroke-width="1" opacity="0.3"/><path d="M1515 723L1501 744" fill="none" stroke="#3b8a66" stroke-width="1" opacity="0.3"/><path d="M1507 702L1515 723" fill="none" stroke="#3b8a66" stroke-width="1" opacity="0.3"/><path d="M1515 723L1507 744" fill="none" stroke="#3b8a66" stroke-width="1" opacity="0.3"/><path d="M1513 702L1515 723" fill="none" stroke="#3b8a66" stroke-width="1" opacity="0.3"/><path d="M1515 723L1513 744" fill="none" stroke="#3b8a66" stroke-width="1" opacity="0.3"/><path d="M1455 696L1455 890" fill="none" stroke="#58a444" stroke-width="1" opacity="0.35"/><path d="M1463 696L1463 890" fill="none" stroke="#58a444" stroke-width="1" opacity="0.3"/><path d="M1421 854L1421 1044" fill="none" stroke="#58a444" stroke-width="1" opacity="0.3"/><circle cx="1445" cy="791" r="7" fill="none" stroke="#58a444" stroke-width="1" opacity="0.4"/><circle cx="1445" cy="893" r="7" fill="none" stroke="#58a444" stroke-width="1" opacity="0.4"/><circle cx="1354" cy="855" r="7" fill="none" stroke="#58a444" stroke-width="1" opacity="0.4"/><circle cx="1354" cy="957" r="7" fill="none" stroke="#58a444" stroke-width="1" opacity="0.4"/><circle cx="1512" cy="800" r="7" fill="none" stroke="#58a444" stroke-width="1" opacity="0.4"/><circle cx="1615" cy="800" r="7" fill="none" stroke="#58a444" stroke-width="1" opacity="0.4"/><rect x="1566" y="841" width="24" height="48" fill="none" stroke="#58a444" stroke-width="1" opacity="0.35" stroke-dasharray="3 2"/><rect x="1550" y="847" width="11" height="10" rx="2" fill="none" stroke="#58a444" stroke-width="1" opacity="0.35" stroke-dasharray="2 1"/><rect x="1595" y="847" width="11" height="10" rx="2" fill="none" stroke="#58a444" stroke-width="1" opacity="0.35" stroke-dasharray="2 1"/><rect x="1550" y="869" width="11" height="10" rx="2" fill="none" stroke="#58a444" stroke-width="1" opacity="0.35" stroke-dasharray="2 1"/><rect x="1595" y="869" width="11" height="10" rx="2" fill="none" stroke="#58a444" stroke-width="1" opacity="0.35" stroke-dasharray="2 1"/><rect x="1572" y="827" width="11" height="10" rx="2" fill="none" stroke="#58a444" stroke-width="1" opacity="0.35" stroke-dasharray="2 1"/><rect x="1572" y="893" width="11" height="10" rx="2" fill="none" stroke="#58a444" stroke-width="1" opacity="0.35" stroke-dasharray="2 1"/><rect x="1566" y="933" width="24" height="48" fill="none" stroke="#58a444" stroke-width="1" opacity="0.35" stroke-dasharray="3 2"/><rect x="1550" y="939" width="11" height="10" rx="2" fill="none" stroke="#58a444" stroke-width="1" opacity="0.35" stroke-dasharray="2 1"/><rect x="1595" y="939" width="11" height="10" rx="2" fill="none" stroke="#58a444" stroke-width="1" opacity="0.35" stroke-dasharray="2 1"/><rect x="1550" y="961" width="11" height="10" rx="2" fill="none" stroke="#58a444" stroke-width="1" opacity="0.35" stroke-dasharray="2 1"/><rect x="1595" y="961" width="11" height="10" rx="2" fill="none" stroke="#58a444" stroke-width="1" opacity="0.35" stroke-dasharray="2 1"/><rect x="1572" y="919" width="11" height="10" rx="2" fill="none" stroke="#58a444" stroke-width="1" opacity="0.35" stroke-dasharray="2 1"/><rect x="1572" y="985" width="11" height="10" rx="2" fill="none" stroke="#58a444" stroke-width="1" opacity="0.35" stroke-dasharray="2 1"/><rect x="1566" y="1023" width="24" height="48" fill="none" stroke="#58a444" stroke-width="1" opacity="0.35" stroke-dasharray="3 2"/><rect x="1550" y="1029" width="11" height="10" rx="2" fill="none" stroke="#58a444" stroke-width="1" opacity="0.35" stroke-dasharray="2 1"/><rect x="1595" y="1029" width="11" height="10" rx="2" fill="none" stroke="#58a444" stroke-width="1" opacity="0.35" stroke-dasharray="2 1"/><rect x="1550" y="1051" width="11" height="10" rx="2" fill="none" stroke="#58a444" stroke-width="1" opacity="0.35" stroke-dasharray="2 1"/><rect x="1595" y="1051" width="11" height="10" rx="2" fill="none" stroke="#58a444" stroke-width="1" opacity="0.35" stroke-dasharray="2 1"/><rect x="1572" y="1009" width="11" height="10" rx="2" fill="none" stroke="#58a444" stroke-width="1" opacity="0.35" stroke-dasharray="2 1"/><rect x="1572" y="1075" width="11" height="10" rx="2" fill="none" stroke="#58a444" stroke-width="1" opacity="0.35" stroke-dasharray="2 1"/><ellipse cx="1394" cy="735" rx="7" ry="9" fill="none" stroke="#3b8a66" stroke-width="1.2" opacity="0.18"/><rect x="1400" y="728" width="5" height="14" fill="none" stroke="#3b8a66" stroke-width="1" opacity="0.18"/><ellipse cx="1372" cy="760" rx="7" ry="9" fill="none" stroke="#3b8a66" stroke-width="1.2" opacity="0.18"/><rect x="1378" y="753" width="5" height="14" fill="none" stroke="#3b8a66" stroke-width="1" opacity="0.18"/><ellipse cx="1410" cy="760" rx="7" ry="9" fill="none" stroke="#3b8a66" stroke-width="1.2" opacity="0.18"/><rect x="1416" y="753" width="5" height="14" fill="none" stroke="#3b8a66" stroke-width="1" opacity="0.18"/><ellipse cx="1395" cy="830" rx="7" ry="9" fill="none" stroke="#3b8a66" stroke-width="1.2" opacity="0.18"/><rect x="1401" y="823" width="5" height="14" fill="none" stroke="#3b8a66" stroke-width="1" opacity="0.18"/><rect x="1415" y="873" width="20" height="28" fill="none" stroke="#7b7035" stroke-width="1" opacity="0.4"/><rect x="1378" y="857" width="18" height="24" fill="none" stroke="#7b7035" stroke-width="1" opacity="0.4"/><path d="M1640 700C1614 735 1605 815 1640 880C1662 905 1706 902 1706 866C1706 836 1672 830 1662 852" fill="none" stroke="#58a444" stroke-width="1.3" opacity="0.45"/><path d="M1620 720C1650 692 1700 700 1690 760C1672 760 1662 780 1680 800C1700 790 1700 790 1690 770" fill="none" stroke="#58a444" stroke-width="1.2" opacity="0.4"/><circle cx="1685" cy="847" r="24" fill="none" stroke="#58a444" stroke-width="1.2" opacity="0.45"/><circle cx="1685" cy="847" r="14" fill="none" stroke="#58a444" stroke-width="1.2" opacity="0.45"/><circle cx="1685" cy="847" r="6" fill="none" stroke="#58a444" stroke-width="1.2" opacity="0.45"/><circle cx="1638" cy="714" r="12" fill="none" stroke="#58a444" stroke-width="1.2" opacity="0.45"/><circle cx="1638" cy="714" r="6" fill="none" stroke="#58a444" stroke-width="1.2" opacity="0.45"/><circle cx="1627" cy="702" r="73" fill="none" stroke="#3b8a66" stroke-width="4" opacity="0.22"/><rect x="1706" y="698" width="26" height="19" rx="6" fill="none" stroke="#58a444" stroke-width="1.5" opacity="0.4"/><rect x="1710" y="702" width="18" height="11" rx="4" fill="none" stroke="#58a444" stroke-width="1" opacity="0.25"/><rect x="1706" y="722" width="26" height="19" rx="6" fill="none" stroke="#58a444" stroke-width="1.5" opacity="0.4"/><rect x="1710" y="726" width="18" height="11" rx="4" fill="none" stroke="#58a444" stroke-width="1" opacity="0.25"/><rect x="1706" y="746" width="26" height="19" rx="6" fill="none" stroke="#58a444" stroke-width="1.5" opacity="0.4"/><rect x="1710" y="750" width="18" height="11" rx="4" fill="none" stroke="#58a444" stroke-width="1" opacity="0.25"/><rect x="1706" y="770" width="26" height="19" rx="6" fill="none" stroke="#58a444" stroke-width="1.5" opacity="0.4"/><rect x="1710" y="774" width="18" height="11" rx="4" fill="none" stroke="#58a444" stroke-width="1" opacity="0.25"/><rect x="1706" y="794" width="26" height="19" rx="6" fill="none" stroke="#58a444" stroke-width="1.5" opacity="0.4"/><rect x="1710" y="798" width="18" height="11" rx="4" fill="none" stroke="#58a444" stroke-width="1" opacity="0.25"/><rect x="1706" y="818" width="26" height="19" rx="6" fill="none" stroke="#58a444" stroke-width="1.5" opacity="0.4"/><rect x="1710" y="822" width="18" height="11" rx="4" fill="none" stroke="#58a444" stroke-width="1" opacity="0.25"/><rect x="1706" y="842" width="26" height="19" rx="6" fill="none" stroke="#58a444" stroke-width="1.5" opacity="0.4"/><rect x="1710" y="846" width="18" height="11" rx="4" fill="none" stroke="#58a444" stroke-width="1" opacity="0.25"/><rect x="1706" y="866" width="26" height="19" rx="6" fill="none" stroke="#58a444" stroke-width="1.5" opacity="0.4"/><rect x="1710" y="870" width="18" height="11" rx="4" fill="none" stroke="#58a444" stroke-width="1" opacity="0.25"/><path d="M1632 800L1906 800" fill="none" stroke="#7b7035" stroke-width="2" opacity="0.5"/><path d="M1684.5 805L1684.5 1044" fill="none" stroke="#7b7035" stroke-width="1" opacity="0.5"/><path d="M1689.5 805L1689.5 1044" fill="none" stroke="#7b7035" stroke-width="1" opacity="0.5"/><path d="M1687 805L1687 1044" fill="none" stroke="#7b7035" stroke-width="4" opacity="0.15" stroke-dasharray="1 2"/><path d="M1904.0 802L1904.0 960" fill="none" stroke="#7b7035" stroke-width="1" opacity="0.45"/><path d="M1908.0 802L1908.0 960" fill="none" stroke="#7b7035" stroke-width="1" opacity="0.45"/><path d="M1906 802L1906 960" fill="none" stroke="#7b7035" stroke-width="3" opacity="0.135" stroke-dasharray="1 2"/><path d="M1838 958L1920 958" fill="none" stroke="#7b7035" stroke-width="2" opacity="0.45"/><path d="M1632 893L1819 893" fill="none" stroke="#76c152" stroke-width="2" opacity="0.4"/><path d="M1819 696L1819 905" fill="none" stroke="#58a444" stroke-width="1.5" opacity="0.4"/><path d="M1716 696L1716 890" fill="none" stroke="#58a444" stroke-width="1.5" opacity="0.4"/><path d="M1751 696L1751 789" fill="none" stroke="#58a444" stroke-width="1" opacity="0.35"/><path d="M1716 789L1819 789" fill="none" stroke="#58a444" stroke-width="1" opacity="0.35"/><rect x="1729" y="863" width="71" height="200" rx="30" fill="none" stroke="#58a444" stroke-width="1" opacity="0.4" stroke-dasharray="3 2"/><rect x="1713" y="896" width="11" height="10" rx="2" fill="none" stroke="#58a444" stroke-width="1" opacity="0.35" stroke-dasharray="2 1"/><rect x="1802" y="896" width="11" height="10" rx="2" fill="none" stroke="#58a444" stroke-width="1" opacity="0.35" stroke-dasharray="2 1"/><rect x="1713" y="918" width="11" height="10" rx="2" fill="none" stroke="#58a444" stroke-width="1" opacity="0.35" stroke-dasharray="2 1"/><rect x="1802" y="918" width="11" height="10" rx="2" fill="none" stroke="#58a444" stroke-width="1" opacity="0.35" stroke-dasharray="2 1"/><rect x="1713" y="941" width="11" height="10" rx="2" fill="none" stroke="#58a444" stroke-width="1" opacity="0.35" stroke-dasharray="2 1"/><rect x="1802" y="941" width="11" height="10" rx="2" fill="none" stroke="#58a444" stroke-width="1" opacity="0.35" stroke-dasharray="2 1"/><rect x="1713" y="963" width="11" height="10" rx="2" fill="none" stroke="#58a444" stroke-width="1" opacity="0.35" stroke-dasharray="2 1"/><rect x="1802" y="963" width="11" height="10" rx="2" fill="none" stroke="#58a444" stroke-width="1" opacity="0.35" stroke-dasharray="2 1"/><rect x="1713" y="986" width="11" height="10" rx="2" fill="none" stroke="#58a444" stroke-width="1" opacity="0.35" stroke-dasharray="2 1"/><rect x="1802" y="986" width="11" height="10" rx="2" fill="none" stroke="#58a444" stroke-width="1" opacity="0.35" stroke-dasharray="2 1"/><rect x="1713" y="1008" width="11" height="10" rx="2" fill="none" stroke="#58a444" stroke-width="1" opacity="0.35" stroke-dasharray="2 1"/><rect x="1802" y="1008" width="11" height="10" rx="2" fill="none" stroke="#58a444" stroke-width="1" opacity="0.35" stroke-dasharray="2 1"/><ellipse cx="1740" cy="706" rx="7" ry="9" fill="none" stroke="#58a444" stroke-width="1.2" opacity="0.35"/><rect x="1746" y="699" width="5" height="14" fill="none" stroke="#58a444" stroke-width="1" opacity="0.35"/><ellipse cx="1760" cy="706" rx="7" ry="9" fill="none" stroke="#58a444" stroke-width="1.2" opacity="0.35"/><rect x="1766" y="699" width="5" height="14" fill="none" stroke="#58a444" stroke-width="1" opacity="0.35"/><ellipse cx="1790" cy="706" rx="7" ry="9" fill="none" stroke="#58a444" stroke-width="1.2" opacity="0.35"/><rect x="1796" y="699" width="5" height="14" fill="none" stroke="#58a444" stroke-width="1" opacity="0.35"/><ellipse cx="1805" cy="706" rx="7" ry="9" fill="none" stroke="#58a444" stroke-width="1.2" opacity="0.35"/><rect x="1811" y="699" width="5" height="14" fill="none" stroke="#58a444" stroke-width="1" opacity="0.35"/><ellipse cx="1650" cy="706" rx="7" ry="9" fill="none" stroke="#58a444" stroke-width="1.2" opacity="0.35"/><rect x="1656" y="699" width="5" height="14" fill="none" stroke="#58a444" stroke-width="1" opacity="0.35"/><ellipse cx="1670" cy="706" rx="7" ry="9" fill="none" stroke="#58a444" stroke-width="1.2" opacity="0.35"/><rect x="1676" y="699" width="5" height="14" fill="none" stroke="#58a444" stroke-width="1" opacity="0.35"/><path d="M1869 696L1869 825" fill="none" stroke="#58a444" stroke-width="1" opacity="0.35" stroke-dasharray="6 4"/><path d="M1869 825L1920 825" fill="none" stroke="#58a444" stroke-width="1" opacity="0.35" stroke-dasharray="6 4"/><path d="M1838 989L1920 989" fill="none" stroke="#7b7035" stroke-width="1" opacity="0.35" stroke-dasharray="6 4"/><rect x="1865" y="892" width="16" height="16" fill="none" stroke="#58a444" stroke-width="1" opacity="0.35"/><rect x="1887" y="852" width="16" height="16" fill="none" stroke="#58a444" stroke-width="1" opacity="0.35"/><rect x="1852" y="752" width="16" height="16" fill="none" stroke="#58a444" stroke-width="1" opacity="0.35"/><rect x="1782" y="722" width="16" height="16" fill="none" stroke="#58a444" stroke-width="1" opacity="0.35"/><path d="M1844 744L1856 756L1856 744L1844 756Z" fill="none" stroke="#58a444" stroke-width="1" opacity="0.4"/><path d="M1884 714L1896 726L1896 714L1884 726Z" fill="none" stroke="#58a444" stroke-width="1" opacity="0.4"/><path d="M1799 549L1811 561L1811 549L1799 561Z" fill="none" stroke="#58a444" stroke-width="1" opacity="0.4"/><path d="M1593 267L1593 391" fill="none" stroke="#3b8a66" stroke-width="1" opacity="0.18" stroke-dasharray="4 3"/><path d="M1417 26L1417 270" fill="none" stroke="#7b7035" stroke-width="1" opacity="0.14"/><path d="M1546 963L1546 1044" fill="none" stroke="#3b8a66" stroke-width="1" opacity="0.18" stroke-dasharray="4 3"/><path d="M1504 474L1504 666" fill="none" stroke="#58a444" stroke-width="1" opacity="0.24" stroke-dasharray="4 3"/><path d="M1749 31L1749 232" fill="none" stroke="#58a444" stroke-width="1" opacity="0.13" stroke-dasharray="4 3"/><path d="M1625 968L1625 1044" fill="none" stroke="#3b8a66" stroke-width="1" opacity="0.25"/><path d="M1787 808L1787 1024" fill="none" stroke="#3b8a66" stroke-width="1" opacity="0.17"/><path d="M1724 199L1724 238" fill="none" stroke="#58a444" stroke-width="1" opacity="0.18"/><path d="M1796 616L1796 753" fill="none" stroke="#3b8a66" stroke-width="1" opacity="0.23" stroke-dasharray="4 3"/><path d="M1709 834L1709 1013" fill="none" stroke="#58a444" stroke-width="1" opacity="0.24" stroke-dasharray="4 3"/><path d="M1379 572L1379 757" fill="none" stroke="#58a444" stroke-width="1" opacity="0.21"/><path d="M1904 213L1904 425" fill="none" stroke="#3b8a66" stroke-width="1" opacity="0.13" stroke-dasharray="4 3"/><path d="M1623 583L1623 644" fill="none" stroke="#58a444" stroke-width="1" opacity="0.18" stroke-dasharray="4 3"/><path d="M1845 181L1845 299" fill="none" stroke="#58a444" stroke-width="1" opacity="0.17"/><path d="M1370 601L1370 740" fill="none" stroke="#58a444" stroke-width="1" opacity="0.11" stroke-dasharray="4 3"/><path d="M1914 571L1914 730" fill="none" stroke="#58a444" stroke-width="1" opacity="0.26"/><path d="M1357 157L1357 214" fill="none" stroke="#3b8a66" stroke-width="1" opacity="0.19"/><path d="M1767 597L1767 783" fill="none" stroke="#7b7035" stroke-width="1" opacity="0.12"/><path d="M1697 642L1697 764" fill="none" stroke="#58a444" stroke-width="1" opacity="0.24"/><path d="M1735 942L1735 1044" fill="none" stroke="#3b8a66" stroke-width="1" opacity="0.16" stroke-dasharray="4 3"/><path d="M1593 616L1593 757" fill="none" stroke="#7b7035" stroke-width="1" opacity="0.18" stroke-dasharray="4 3"/><path d="M1697 23L1697 254" fill="none" stroke="#7b7035" stroke-width="1" opacity="0.26"/><path d="M1486 123L1486 315" fill="none" stroke="#3b8a66" stroke-width="1" opacity="0.15"/><path d="M1711 571L1711 789" fill="none" stroke="#7b7035" stroke-width="1" opacity="0.1"/><path d="M1371 756L1371 850" fill="none" stroke="#7b7035" stroke-width="1" opacity="0.19"/><path d="M1531 745L1531 822" fill="none" stroke="#7b7035" stroke-width="1" opacity="0.22" stroke-dasharray="4 3"/><path d="M1620 615L1620 846" fill="none" stroke="#7b7035" stroke-width="1" opacity="0.12"/><path d="M1625 488L1625 601" fill="none" stroke="#58a444" stroke-width="1" opacity="0.21" stroke-dasharray="4 3"/><path d="M1449 208L1449 391" fill="none" stroke="#7b7035" stroke-width="1" opacity="0.25" stroke-dasharray="4 3"/><path d="M1579 897L1579 1044" fill="none" stroke="#58a444" stroke-width="1" opacity="0.11" stroke-dasharray="4 3"/><path d="M1573 923L1573 1022" fill="none" stroke="#58a444" stroke-width="1" opacity="0.23"/><path d="M1892 390L1892 500" fill="none" stroke="#3b8a66" stroke-width="1" opacity="0.13"/><path d="M1698 175L1698 411" fill="none" stroke="#3b8a66" stroke-width="1" opacity="0.16"/><path d="M1781 597L1781 759" fill="none" stroke="#7b7035" stroke-width="1" opacity="0.17" stroke-dasharray="4 3"/><path d="M1776 594L1776 731" fill="none" stroke="#3b8a66" stroke-width="1" opacity="0.17"/><path d="M1509 408L1509 439" fill="none" stroke="#7b7035" stroke-width="1" opacity="0.25" stroke-dasharray="4 3"/><path d="M1872 889L1872 1044" fill="none" stroke="#3b8a66" stroke-width="1" opacity="0.14" stroke-dasharray="4 3"/><path d="M1817 591L1817 760" fill="none" stroke="#7b7035" stroke-width="1" opacity="0.24"/><path d="M1643 245L1643 482" fill="none" stroke="#58a444" stroke-width="1" opacity="0.11" stroke-dasharray="4 3"/><path d="M1874 406L1874 665" fill="none" stroke="#7b7035" stroke-width="1" opacity="0.19"/><path d="M1842 247L1842 320" fill="none" stroke="#3b8a66" stroke-width="1" opacity="0.15" stroke-dasharray="4 3"/><path d="M1370 847L1370 890" fill="none" stroke="#3b8a66" stroke-width="1" opacity="0.12"/><path d="M1608 977L1608 1044" fill="none" stroke="#58a444" stroke-width="1" opacity="0.16"/><path d="M1475 244L1475 317" fill="none" stroke="#58a444" stroke-width="1" opacity="0.23"/><path d="M1759 102L1759 325" fill="none" stroke="#7b7035" stroke-width="1" opacity="0.14" stroke-dasharray="4 3"/><path d="M1889 866L1889 909" fill="none" stroke="#7b7035" stroke-width="1" opacity="0.15"/><path d="M1406 259L1406 300" fill="none" stroke="#58a444" stroke-width="1" opacity="0.11"/><path d="M1383 176L1383 337" fill="none" stroke="#3b8a66" stroke-width="1" opacity="0.18"/><path d="M1672 146L1672 265" fill="none" stroke="#7b7035" stroke-width="1" opacity="0.2" stroke-dasharray="4 3"/><path d="M1661 738L1661 835" fill="none" stroke="#58a444" stroke-width="1" opacity="0.26"/><path d="M1476 261L1476 433" fill="none" stroke="#58a444" stroke-width="1" opacity="0.21"/><path d="M1431 365L1431 405" fill="none" stroke="#7b7035" stroke-width="1" opacity="0.17" stroke-dasharray="4 3"/><path d="M1904 778L1904 970" fill="none" stroke="#58a444" stroke-width="1" opacity="0.2"/><path d="M1672 861L1672 1044" fill="none" stroke="#7b7035" stroke-width="1" opacity="0.17"/><path d="M1573 553L1573 760" fill="none" stroke="#3b8a66" stroke-width="1" opacity="0.11"/><path d="M1579 872L1579 935" fill="none" stroke="#58a444" stroke-width="1" opacity="0.25"/><path d="M1618 248L1618 396" fill="none" stroke="#3b8a66" stroke-width="1" opacity="0.12" stroke-dasharray="4 3"/><path d="M1892 770L1892 970" fill="none" stroke="#58a444" stroke-width="1" opacity="0.22" stroke-dasharray="4 3"/><path d="M1894 211L1894 448" fill="none" stroke="#3b8a66" stroke-width="1" opacity="0.21"/><path d="M1889 188L1889 362" fill="none" stroke="#58a444" stroke-width="1" opacity="0.21"/><path d="M1533 48L1533 165" fill="none" stroke="#58a444" stroke-width="1" opacity="0.1"/><path d="M1843 582L1843 760" fill="none" stroke="#7b7035" stroke-width="1" opacity="0.23"/><path d="M1873 488L1873 545" fill="none" stroke="#3b8a66" stroke-width="1" opacity="0.22" stroke-dasharray="4 3"/><path d="M1429 495L1429 571" fill="none" stroke="#7b7035" stroke-width="1" opacity="0.2"/><path d="M1608 752L1608 935" fill="none" stroke="#7b7035" stroke-width="1" opacity="0.25" stroke-dasharray="4 3"/><path d="M1778 170L1778 296" fill="none" stroke="#3b8a66" stroke-width="1" opacity="0.14"/><path d="M1514 850L1514 1044" fill="none" stroke="#3b8a66" stroke-width="1" opacity="0.22" stroke-dasharray="4 3"/><path d="M1879 990L1879 1044" fill="none" stroke="#3b8a66" stroke-width="1" opacity="0.16"/><path d="M1516 196L1516 353" fill="none" stroke="#3b8a66" stroke-width="1" opacity="0.18" stroke-dasharray="4 3"/><path d="M1879 907L1879 1044" fill="none" stroke="#3b8a66" stroke-width="1" opacity="0.24"/><path d="M1623 407L1623 474" fill="none" stroke="#3b8a66" stroke-width="1" opacity="0.18"/><path d="M1900 605L1900 806" fill="none" stroke="#3b8a66" stroke-width="1" opacity="0.24" stroke-dasharray="4 3"/><path d="M1623 445L1623 553" fill="none" stroke="#58a444" stroke-width="1" opacity="0.14"/><path d="M1555 352L1555 527" fill="none" stroke="#7b7035" stroke-width="1" opacity="0.14"/><path d="M1560 958L1560 1044" fill="none" stroke="#3b8a66" stroke-width="1" opacity="0.19"/><path d="M1424 819L1424 1044" fill="none" stroke="#58a444" stroke-width="1" opacity="0.17"/><path d="M1590 141L1590 226" fill="none" stroke="#7b7035" stroke-width="1" opacity="0.14"/><path d="M1614 281L1614 358" fill="none" stroke="#3b8a66" stroke-width="1" opacity="0.21"/><path d="M1611 347L1611 598" fill="none" stroke="#58a444" stroke-width="1" opacity="0.15"/><path d="M1443 175L1443 235" fill="none" stroke="#58a444" stroke-width="1" opacity="0.14"/><path d="M1694 14L1694 51" fill="none" stroke="#7b7035" stroke-width="1" opacity="0.15"/><path d="M1847 159L1847 242" fill="none" stroke="#3b8a66" stroke-width="1" opacity="0.19"/><path d="M1750 256L1750 425" fill="none" stroke="#7b7035" stroke-width="1" opacity="0.12"/><path d="M1890 513L1890 567" fill="none" stroke="#3b8a66" stroke-width="1" opacity="0.25"/><path d="M1727 922L1727 1027" fill="none" stroke="#3b8a66" stroke-width="1" opacity="0.21" stroke-dasharray="4 3"/><path d="M1621 219L1621 442" fill="none" stroke="#7b7035" stroke-width="1" opacity="0.21" stroke-dasharray="4 3"/><path d="M1888 232L1888 432" fill="none" stroke="#7b7035" stroke-width="1" opacity="0.18"/><path d="M1651 372L1651 567" fill="none" stroke="#3b8a66" stroke-width="1" opacity="0.22"/><path d="M1533 759L1533 1016" fill="none" stroke="#3b8a66" stroke-width="1" opacity="0.17"/><path d="M1494 678L1494 873" fill="none" stroke="#3b8a66" stroke-width="1" opacity="0.17"/><path d="M1541 937L1541 1044" fill="none" stroke="#7b7035" stroke-width="1" opacity="0.23" stroke-dasharray="4 3"/><path d="M1420 219L1420 432" fill="none" stroke="#58a444" stroke-width="1" opacity="0.22" stroke-dasharray="4 3"/><path d="M1751 735L1751 790" fill="none" stroke="#7b7035" stroke-width="1" opacity="0.14"/><path d="M1489 86L1489 238" fill="none" stroke="#3b8a66" stroke-width="1" opacity="0.14" stroke-dasharray="4 3"/><path d="M1877 725L1877 979" fill="none" stroke="#7b7035" stroke-width="1" opacity="0.25"/><path d="M1904 141L1904 261" fill="none" stroke="#7b7035" stroke-width="1" opacity="0.24"/><path d="M1505 553L1505 734" fill="none" stroke="#58a444" stroke-width="1" opacity="0.21" stroke-dasharray="4 3"/><path d="M1464 378L1464 586" fill="none" stroke="#58a444" stroke-width="1" opacity="0.19" stroke-dasharray="4 3"/><path d="M1475 801L1656 801" fill="none" stroke="#7b7035" stroke-width="1" opacity="0.23" stroke-dasharray="4 3"/><path d="M1527 348L1608 348" fill="none" stroke="#7b7035" stroke-width="1" opacity="0.16"/><path d="M1799 61L1920 61" fill="none" stroke="#7b7035" stroke-width="1" opacity="0.15" stroke-dasharray="4 3"/><path d="M1853 634L1920 634" fill="none" stroke="#3b8a66" stroke-width="1" opacity="0.21" stroke-dasharray="4 3"/><path d="M1454 4L1653 4" fill="none" stroke="#58a444" stroke-width="1" opacity="0.18" stroke-dasharray="4 3"/><path d="M1547 943L1626 943" fill="none" stroke="#3b8a66" stroke-width="1" opacity="0.13" stroke-dasharray="4 3"/><path d="M1482 312L1631 312" fill="none" stroke="#58a444" stroke-width="1" opacity="0.2"/><path d="M1712 52L1900 52" fill="none" stroke="#58a444" stroke-width="1" opacity="0.18"/><path d="M1691 38L1803 38" fill="none" stroke="#7b7035" stroke-width="1" opacity="0.24" stroke-dasharray="4 3"/><path d="M1426 275L1609 275" fill="none" stroke="#58a444" stroke-width="1" opacity="0.21" stroke-dasharray="4 3"/><path d="M1554 703L1600 703" fill="none" stroke="#58a444" stroke-width="1" opacity="0.17"/><path d="M1667 993L1724 993" fill="none" stroke="#58a444" stroke-width="1" opacity="0.17"/><path d="M1744 329L1901 329" fill="none" stroke="#7b7035" stroke-width="1" opacity="0.21" stroke-dasharray="4 3"/><path d="M1557 864L1753 864" fill="none" stroke="#7b7035" stroke-width="1" opacity="0.15"/><path d="M1755 937L1897 937" fill="none" stroke="#58a444" stroke-width="1" opacity="0.17"/><path d="M1719 525L1843 525" fill="none" stroke="#7b7035" stroke-width="1" opacity="0.18" stroke-dasharray="4 3"/><path d="M1573 822L1603 822" fill="none" stroke="#58a444" stroke-width="1" opacity="0.14"/><path d="M1815 293L1920 293" fill="none" stroke="#58a444" stroke-width="1" opacity="0.13"/><path d="M1757 349L1915 349" fill="none" stroke="#58a444" stroke-width="1" opacity="0.2"/><path d="M1516 225L1659 225" fill="none" stroke="#7b7035" stroke-width="1" opacity="0.13"/><path d="M1802 825L1913 825" fill="none" stroke="#7b7035" stroke-width="1" opacity="0.11" stroke-dasharray="4 3"/><path d="M1588 104L1721 104" fill="none" stroke="#58a444" stroke-width="1" opacity="0.16"/><path d="M1591 448L1645 448" fill="none" stroke="#7b7035" stroke-width="1" opacity="0.18"/><path d="M1462 681L1580 681" fill="none" stroke="#3b8a66" stroke-width="1" opacity="0.11" stroke-dasharray="4 3"/><path d="M1625 595L1774 595" fill="none" stroke="#7b7035" stroke-width="1" opacity="0.18" stroke-dasharray="4 3"/><path d="M1374 544L1490 544" fill="none" stroke="#7b7035" stroke-width="1" opacity="0.15"/><path d="M1435 891L1616 891" fill="none" stroke="#58a444" stroke-width="1" opacity="0.1"/><path d="M1518 39L1676 39" fill="none" stroke="#58a444" stroke-width="1" opacity="0.18"/><path d="M1683 1043L1764 1043" fill="none" stroke="#7b7035" stroke-width="1" opacity="0.15"/><path d="M1893 684L1920 684" fill="none" stroke="#7b7035" stroke-width="1" opacity="0.13" stroke-dasharray="4 3"/><path d="M1910 790L1920 790" fill="none" stroke="#58a444" stroke-width="1" opacity="0.16"/><path d="M1578 897L1721 897" fill="none" stroke="#3b8a66" stroke-width="1" opacity="0.18"/><path d="M1863 347L1920 347" fill="none" stroke="#3b8a66" stroke-width="1" opacity="0.25" stroke-dasharray="4 3"/><path d="M1842 792L1882 792" fill="none" stroke="#58a444" stroke-width="1" opacity="0.13"/><path d="M1438 956L1645 956" fill="none" stroke="#58a444" stroke-width="1" opacity="0.15" stroke-dasharray="4 3"/><path d="M1393 115L1538 115" fill="none" stroke="#7b7035" stroke-width="1" opacity="0.24" stroke-dasharray="4 3"/><path d="M1722 683L1752 683" fill="none" stroke="#58a444" stroke-width="1" opacity="0.13"/><path d="M1662 693L1720 693" fill="none" stroke="#7b7035" stroke-width="1" opacity="0.11" stroke-dasharray="4 3"/><path d="M1590 430L1796 430" fill="none" stroke="#58a444" stroke-width="1" opacity="0.26" stroke-dasharray="4 3"/><path d="M1355 293L1413 293" fill="none" stroke="#58a444" stroke-width="1" opacity="0.15"/><path d="M1919 450L1920 450" fill="none" stroke="#7b7035" stroke-width="1" opacity="0.18" stroke-dasharray="4 3"/><path d="M1892 653L1920 653" fill="none" stroke="#7b7035" stroke-width="1" opacity="0.13"/><path d="M1459 84L1642 84" fill="none" stroke="#58a444" stroke-width="1" opacity="0.24"/><path d="M1605 408L1656 408" fill="none" stroke="#58a444" stroke-width="1" opacity="0.17"/><path d="M1841 222L1920 222" fill="none" stroke="#3b8a66" stroke-width="1" opacity="0.16" stroke-dasharray="4 3"/><path d="M1457 912L1561 912" fill="none" stroke="#3b8a66" stroke-width="1" opacity="0.17"/><path d="M1417 992L1588 992" fill="none" stroke="#7b7035" stroke-width="1" opacity="0.17" stroke-dasharray="4 3"/><path d="M1875 137L1920 137" fill="none" stroke="#58a444" stroke-width="1" opacity="0.16"/><path d="M1585 686L1725 686" fill="none" stroke="#7b7035" stroke-width="1" opacity="0.11"/><path d="M1513 661L1595 661" fill="none" stroke="#3b8a66" stroke-width="1" opacity="0.13" stroke-dasharray="4 3"/><path d="M1892 949L1920 949" fill="none" stroke="#7b7035" stroke-width="1" opacity="0.25" stroke-dasharray="4 3"/><path d="M1839 838L1920 838" fill="none" stroke="#7b7035" stroke-width="1" opacity="0.26"/><path d="M1362 598L1439 598" fill="none" stroke="#58a444" stroke-width="1" opacity="0.22"/><path d="M1875 1031L1920 1031" fill="none" stroke="#3b8a66" stroke-width="1" opacity="0.18"/><path d="M1626 424L1781 424" fill="none" stroke="#7b7035" stroke-width="1" opacity="0.11"/><path d="M1638 402L1704 402" fill="none" stroke="#58a444" stroke-width="1" opacity="0.17"/><path d="M1728 582L1920 582" fill="none" stroke="#7b7035" stroke-width="1" opacity="0.25"/><path d="M1818 638L1920 638" fill="none" stroke="#3b8a66" stroke-width="1" opacity="0.26"/><path d="M1639 736L1742 736" fill="none" stroke="#58a444" stroke-width="1" opacity="0.17"/><path d="M1592 609L1755 609" fill="none" stroke="#58a444" stroke-width="1" opacity="0.1" stroke-dasharray="4 3"/><path d="M1892 305L1920 305" fill="none" stroke="#58a444" stroke-width="1" opacity="0.25"/><path d="M1820 417L1920 417" fill="none" stroke="#7b7035" stroke-width="1" opacity="0.26"/><path d="M1533 1003L1624 1003" fill="none" stroke="#58a444" stroke-width="1" opacity="0.14"/><path d="M1903 104L1920 104" fill="none" stroke="#7b7035" stroke-width="1" opacity="0.15"/><path d="M1772 1021L1920 1021" fill="none" stroke="#7b7035" stroke-width="1" opacity="0.15"/><path d="M1382 879L1572 879" fill="none" stroke="#58a444" stroke-width="1" opacity="0.25" stroke-dasharray="4 3"/><path d="M1482 506L1702 506" fill="none" stroke="#7b7035" stroke-width="1" opacity="0.18"/><path d="M1630 273L1664 273" fill="none" stroke="#58a444" stroke-width="1" opacity="0.11"/><path d="M1815 123L1920 123" fill="none" stroke="#3b8a66" stroke-width="1" opacity="0.21" stroke-dasharray="4 3"/><path d="M1723 848L1885 848" fill="none" stroke="#3b8a66" stroke-width="1" opacity="0.13"/><path d="M1486 151L1656 151" fill="none" stroke="#58a444" stroke-width="1" opacity="0.17"/><path d="M1809 909L1910 909" fill="none" stroke="#7b7035" stroke-width="1" opacity="0.17" stroke-dasharray="4 3"/><path d="M1666 318L1731 318" fill="none" stroke="#3b8a66" stroke-width="1" opacity="0.11"/><path d="M1813 472L1920 472" fill="none" stroke="#3b8a66" stroke-width="1" opacity="0.14"/><path d="M1843 237L1905 237" fill="none" stroke="#7b7035" stroke-width="1" opacity="0.23"/><path d="M1789 209L1920 209" fill="none" stroke="#58a444" stroke-width="1" opacity="0.16" stroke-dasharray="4 3"/><path d="M1802 997L1881 997" fill="none" stroke="#7b7035" stroke-width="1" opacity="0.25"/><path d="M1750 785L1860 785" fill="none" stroke="#58a444" stroke-width="1" opacity="0.14"/><path d="M1669 648L1855 648" fill="none" stroke="#7b7035" stroke-width="1" opacity="0.19"/><path d="M1771 269L1865 269" fill="none" stroke="#7b7035" stroke-width="1" opacity="0.26"/><path d="M1579 1014L1660 1014" fill="none" stroke="#3b8a66" stroke-width="1" opacity="0.11" stroke-dasharray="4 3"/><path d="M1470 235L1661 235" fill="none" stroke="#58a444" stroke-width="1" opacity="0.25" stroke-dasharray="4 3"/><path d="M1785 142L1883 142" fill="none" stroke="#7b7035" stroke-width="1" opacity="0.17"/><path d="M1522 96L1612 96" fill="none" stroke="#7b7035" stroke-width="1" opacity="0.25"/><path d="M1526 306L1732 306" fill="none" stroke="#7b7035" stroke-width="1" opacity="0.21" stroke-dasharray="4 3"/><path d="M1489 17L1619 17" fill="none" stroke="#58a444" stroke-width="1" opacity="0.13" stroke-dasharray="4 3"/><path d="M1662 360L1740 360" fill="none" stroke="#3b8a66" stroke-width="1" opacity="0.23"/><path d="M1880 99L1920 99" fill="none" stroke="#3b8a66" stroke-width="1" opacity="0.13"/><path d="M1743 887L1819 887" fill="none" stroke="#58a444" stroke-width="1" opacity="0.14"/><path d="M1492 235L1597 235" fill="none" stroke="#58a444" stroke-width="1" opacity="0.16" stroke-dasharray="4 3"/><path d="M1540 157L1571 157" fill="none" stroke="#7b7035" stroke-width="1" opacity="0.26"/><path d="M1450 993L1660 993" fill="none" stroke="#7b7035" stroke-width="1" opacity="0.1"/><path d="M1761 906L1909 906" fill="none" stroke="#3b8a66" stroke-width="1" opacity="0.19"/><path d="M1891 305L1920 305" fill="none" stroke="#7b7035" stroke-width="1" opacity="0.13" stroke-dasharray="4 3"/><path d="M1527 605L1633 605" fill="none" stroke="#58a444" stroke-width="1" opacity="0.15"/><path d="M1398 267L1582 267" fill="none" stroke="#58a444" stroke-width="1" opacity="0.17"/><path d="M1358 234L1428 234" fill="none" stroke="#58a444" stroke-width="1" opacity="0.23" stroke-dasharray="4 3"/><path d="M1881 766L1920 766" fill="none" stroke="#7b7035" stroke-width="1" opacity="0.11" stroke-dasharray="4 3"/><path d="M1677 903L1744 903" fill="none" stroke="#3b8a66" stroke-width="1" opacity="0.2"/><path d="M1862 934L1920 934" fill="none" stroke="#7b7035" stroke-width="1" opacity="0.2" stroke-dasharray="4 3"/><path d="M1696 734L1902 734" fill="none" stroke="#7b7035" stroke-width="1" opacity="0.15"/><circle cx="1636" cy="373" r="4" fill="none" stroke="#58a444" stroke-width="1" opacity="0.28"/><circle cx="1709" cy="509" r="5" fill="none" stroke="#7b7035" stroke-width="1" opacity="0.28"/><circle cx="1633" cy="927" r="4" fill="none" stroke="#7b7035" stroke-width="1" opacity="0.28"/><circle cx="1702" cy="360" r="7" fill="none" stroke="#7b7035" stroke-width="1" opacity="0.28"/><circle cx="1412" cy="141" r="5" fill="none" stroke="#7b7035" stroke-width="1" opacity="0.28"/><circle cx="1658" cy="121" r="4" fill="none" stroke="#7b7035" stroke-width="1" opacity="0.28"/><circle cx="1753" cy="432" r="4" fill="none" stroke="#7b7035" stroke-width="1" opacity="0.28"/><circle cx="1886" cy="439" r="4" fill="none" stroke="#7b7035" stroke-width="1" opacity="0.28"/><circle cx="1480" cy="882" r="7" fill="none" stroke="#7b7035" stroke-width="1" opacity="0.28"/><circle cx="1730" cy="24" r="5" fill="none" stroke="#7b7035" stroke-width="1" opacity="0.28"/><circle cx="1877" cy="759" r="5" fill="none" stroke="#7b7035" stroke-width="1" opacity="0.28"/><circle cx="1741" cy="213" r="7" fill="none" stroke="#7b7035" stroke-width="1" opacity="0.28"/><circle cx="1509" cy="662" r="4" fill="none" stroke="#58a444" stroke-width="1" opacity="0.28"/><circle cx="1739" cy="131" r="7" fill="none" stroke="#58a444" stroke-width="1" opacity="0.28"/><circle cx="1502" cy="167" r="4" fill="none" stroke="#7b7035" stroke-width="1" opacity="0.28"/><circle cx="1805" cy="579" r="4" fill="none" stroke="#58a444" stroke-width="1" opacity="0.28"/><circle cx="1389" cy="642" r="7" fill="none" stroke="#7b7035" stroke-width="1" opacity="0.28"/><circle cx="1732" cy="436" r="5" fill="none" stroke="#7b7035" stroke-width="1" opacity="0.28"/><circle cx="1483" cy="1043" r="5" fill="none" stroke="#58a444" stroke-width="1" opacity="0.28"/><circle cx="1846" cy="284" r="5" fill="none" stroke="#7b7035" stroke-width="1" opacity="0.28"/><circle cx="1554" cy="240" r="4" fill="none" stroke="#58a444" stroke-width="1" opacity="0.28"/><circle cx="1801" cy="57" r="5" fill="none" stroke="#7b7035" stroke-width="1" opacity="0.28"/><circle cx="1367" cy="1003" r="4" fill="none" stroke="#7b7035" stroke-width="1" opacity="0.28"/><circle cx="1640" cy="286" r="5" fill="none" stroke="#58a444" stroke-width="1" opacity="0.28"/><circle cx="1883" cy="885" r="7" fill="none" stroke="#7b7035" stroke-width="1" opacity="0.28"/><circle cx="1806" cy="587" r="4" fill="none" stroke="#58a444" stroke-width="1" opacity="0.28"/><circle cx="1425" cy="904" r="7" fill="none" stroke="#7b7035" stroke-width="1" opacity="0.28"/><circle cx="1427" cy="19" r="5" fill="none" stroke="#7b7035" stroke-width="1" opacity="0.28"/><circle cx="1792" cy="192" r="7" fill="none" stroke="#7b7035" stroke-width="1" opacity="0.28"/><circle cx="1788" cy="462" r="5" fill="none" stroke="#58a444" stroke-width="1" opacity="0.28"/><circle cx="1761" cy="181" r="4" fill="none" stroke="#58a444" stroke-width="1" opacity="0.28"/><circle cx="1881" cy="490" r="7" fill="none" stroke="#58a444" stroke-width="1" opacity="0.28"/><circle cx="1544" cy="475" r="5" fill="none" stroke="#7b7035" stroke-width="1" opacity="0.28"/><circle cx="1651" cy="704" r="5" fill="none" stroke="#58a444" stroke-width="1" opacity="0.28"/><circle cx="1567" cy="611" r="5" fill="none" stroke="#58a444" stroke-width="1" opacity="0.28"/><circle cx="1904" cy="746" r="7" fill="none" stroke="#7b7035" stroke-width="1" opacity="0.28"/><circle cx="1682" cy="416" r="5" fill="none" stroke="#58a444" stroke-width="1" opacity="0.28"/><circle cx="1803" cy="639" r="7" fill="none" stroke="#58a444" stroke-width="1" opacity="0.28"/><circle cx="1865" cy="442" r="4" fill="none" stroke="#58a444" stroke-width="1" opacity="0.28"/><circle cx="1827" cy="245" r="7" fill="none" stroke="#7b7035" stroke-width="1" opacity="0.28"/><circle cx="1577" cy="645" r="4" fill="none" stroke="#58a444" stroke-width="1" opacity="0.28"/><circle cx="1694" cy="1021" r="4" fill="none" stroke="#7b7035" stroke-width="1" opacity="0.28"/><circle cx="1418" cy="484" r="5" fill="none" stroke="#7b7035" stroke-width="1" opacity="0.28"/><circle cx="1758" cy="457" r="4" fill="none" stroke="#7b7035" stroke-width="1" opacity="0.28"/><circle cx="1616" cy="707" r="5" fill="none" stroke="#58a444" stroke-width="1" opacity="0.28"/><rect x="1835" y="1028" width="10" height="16" fill="none" stroke="#58a444" stroke-width="1" opacity="0.28"/><rect x="1586" y="265" width="10" height="12" fill="none" stroke="#58a444" stroke-width="1" opacity="0.28"/><rect x="1769" y="212" width="8" height="12" fill="none" stroke="#58a444" stroke-width="1" opacity="0.28"/><rect x="1590" y="870" width="14" height="12" fill="none" stroke="#58a444" stroke-width="1" opacity="0.28"/><rect x="1569" y="740" width="14" height="12" fill="none" stroke="#7b7035" stroke-width="1" opacity="0.28"/><rect x="1786" y="221" width="14" height="12" fill="none" stroke="#7b7035" stroke-width="1" opacity="0.28"/><rect x="1671" y="97" width="8" height="16" fill="none" stroke="#7b7035" stroke-width="1" opacity="0.28"/><rect x="1730" y="58" width="14" height="8" fill="none" stroke="#7b7035" stroke-width="1" opacity="0.28"/><rect x="1746" y="960" width="10" height="16" fill="none" stroke="#7b7035" stroke-width="1" opacity="0.28"/><rect x="1593" y="438" width="14" height="12" fill="none" stroke="#7b7035" stroke-width="1" opacity="0.28"/><rect x="1687" y="673" width="10" height="8" fill="none" stroke="#58a444" stroke-width="1" opacity="0.28"/><rect x="1847" y="469" width="10" height="16" fill="none" stroke="#58a444" stroke-width="1" opacity="0.28"/><rect x="1778" y="369" width="8" height="12" fill="none" stroke="#58a444" stroke-width="1" opacity="0.28"/><rect x="1632" y="529" width="14" height="16" fill="none" stroke="#58a444" stroke-width="1" opacity="0.28"/><rect x="1708" y="423" width="10" height="8" fill="none" stroke="#7b7035" stroke-width="1" opacity="0.28"/><rect x="1901" y="689" width="8" height="16" fill="none" stroke="#58a444" stroke-width="1" opacity="0.28"/><rect x="1839" y="819" width="14" height="16" fill="none" stroke="#7b7035" stroke-width="1" opacity="0.28"/><rect x="1779" y="953" width="14" height="12" fill="none" stroke="#7b7035" stroke-width="1" opacity="0.28"/><rect x="1690" y="896" width="14" height="16" fill="none" stroke="#7b7035" stroke-width="1" opacity="0.28"/><rect x="1485" y="473" width="14" height="16" fill="none" stroke="#7b7035" stroke-width="1" opacity="0.28"/><rect x="1696" y="530" width="10" height="16" fill="none" stroke="#58a444" stroke-width="1" opacity="0.28"/><rect x="1607" y="342" width="14" height="8" fill="none" stroke="#7b7035" stroke-width="1" opacity="0.28"/><rect x="1845" y="152" width="10" height="16" fill="none" stroke="#58a444" stroke-width="1" opacity="0.28"/><rect x="1643" y="977" width="14" height="12" fill="none" stroke="#58a444" stroke-width="1" opacity="0.28"/><rect x="1757" y="443" width="10" height="8" fill="none" stroke="#7b7035" stroke-width="1" opacity="0.28"/><rect x="1763" y="630" width="10" height="8" fill="none" stroke="#58a444" stroke-width="1" opacity="0.28"/><rect x="1790" y="533" width="14" height="8" fill="none" stroke="#58a444" stroke-width="1" opacity="0.28"/><rect x="1738" y="721" width="8" height="8" fill="none" stroke="#58a444" stroke-width="1" opacity="0.28"/><rect x="1762" y="590" width="8" height="12" fill="none" stroke="#7b7035" stroke-width="1" opacity="0.28"/><rect x="1683" y="320" width="8" height="12" fill="none" stroke="#7b7035" stroke-width="1" opacity="0.28"/><rect x="1830" y="361" width="8" height="12" fill="none" stroke="#58a444" stroke-width="1" opacity="0.28"/><rect x="1588" y="1010" width="8" height="12" fill="none" stroke="#7b7035" stroke-width="1" opacity="0.28"/><rect x="1702" y="191" width="10" height="12" fill="none" stroke="#58a444" stroke-width="1" opacity="0.28"/><rect x="1615" y="625" width="14" height="8" fill="none" stroke="#58a444" stroke-width="1" opacity="0.28"/><rect x="1606" y="304" width="10" height="16" fill="none" stroke="#7b7035" stroke-width="1" opacity="0.28"/><rect x="1534" y="140" width="14" height="8" fill="none" stroke="#58a444" stroke-width="1" opacity="0.28"/><rect x="1595" y="508" width="10" height="8" fill="none" stroke="#7b7035" stroke-width="1" opacity="0.28"/><rect x="1904" y="820" width="8" height="8" fill="none" stroke="#58a444" stroke-width="1" opacity="0.28"/><rect x="1821" y="542" width="10" height="16" fill="none" stroke="#58a444" stroke-width="1" opacity="0.28"/><rect x="1670" y="961" width="10" height="16" fill="none" stroke="#7b7035" stroke-width="1" opacity="0.28"/><rect x="1738" y="619" width="14" height="16" fill="none" stroke="#7b7035" stroke-width="1" opacity="0.28"/><rect x="1891" y="480" width="10" height="12" fill="none" stroke="#7b7035" stroke-width="1" opacity="0.28"/><rect x="1779" y="962" width="10" height="8" fill="none" stroke="#58a444" stroke-width="1" opacity="0.28"/><rect x="1496" y="214" width="10" height="16" fill="none" stroke="#58a444" stroke-width="1" opacity="0.28"/><rect x="1588" y="849" width="8" height="16" fill="none" stroke="#58a444" stroke-width="1" opacity="0.28"/><rect x="1837" y="784" width="14" height="12" fill="none" stroke="#7b7035" stroke-width="1" opacity="0.28"/><rect x="1502" y="683" width="14" height="16" fill="none" stroke="#7b7035" stroke-width="1" opacity="0.28"/><rect x="1583" y="160" width="8" height="8" fill="none" stroke="#58a444" stroke-width="1" opacity="0.28"/><rect x="1728" y="478" width="14" height="12" fill="none" stroke="#58a444" stroke-width="1" opacity="0.28"/><rect x="1539" y="597" width="10" height="16" fill="none" stroke="#58a444" stroke-width="1" opacity="0.28"/><rect x="1612" y="180" width="8" height="16" fill="none" stroke="#58a444" stroke-width="1" opacity="0.28"/><rect x="1828" y="181" width="8" height="8" fill="none" stroke="#58a444" stroke-width="1" opacity="0.28"/><rect x="1802" y="844" width="14" height="12" fill="none" stroke="#7b7035" stroke-width="1" opacity="0.28"/><rect x="1763" y="719" width="14" height="12" fill="none" stroke="#7b7035" stroke-width="1" opacity="0.28"/><rect x="1570" y="757" width="8" height="8" fill="none" stroke="#7b7035" stroke-width="1" opacity="0.28"/><rect x="1829" y="755" width="10" height="8" fill="none" stroke="#58a444" stroke-width="1" opacity="0.28"/><rect x="1496" y="384" width="14" height="16" fill="none" stroke="#7b7035" stroke-width="1" opacity="0.28"/><rect x="1907" y="1034" width="10" height="8" fill="none" stroke="#58a444" stroke-width="1" opacity="0.28"/><rect x="1890" y="256" width="10" height="8" fill="none" stroke="#7b7035" stroke-width="1" opacity="0.28"/><rect x="1821" y="778" width="10" height="16" fill="none" stroke="#58a444" stroke-width="1" opacity="0.28"/><path d="M1831 463L1807 481" fill="none" stroke="#58a444" stroke-width="1" opacity="0.28"/><path d="M1733 220L1759 234" fill="none" stroke="#58a444" stroke-width="1" opacity="0.28"/><path d="M1781 98L1803 131" fill="none" stroke="#58a444" stroke-width="1" opacity="0.28"/><path d="M1497 558L1480 612" fill="none" stroke="#58a444" stroke-width="1" opacity="0.28"/><path d="M1676 98L1681 113" fill="none" stroke="#58a444" stroke-width="1" opacity="0.28"/><path d="M1727 228L1731 255" fill="none" stroke="#58a444" stroke-width="1" opacity="0.28"/><path d="M1902 271L1862 308" fill="none" stroke="#58a444" stroke-width="1" opacity="0.28"/><path d="M1770 678L1819 716" fill="none" stroke="#58a444" stroke-width="1" opacity="0.28"/><path d="M1816 652L1789 672" fill="none" stroke="#58a444" stroke-width="1" opacity="0.28"/><path d="M1562 462L1558 509" fill="none" stroke="#58a444" stroke-width="1" opacity="0.28"/><path d="M1670 595L1718 619" fill="none" stroke="#58a444" stroke-width="1" opacity="0.28"/><path d="M1911 129L1877 129" fill="none" stroke="#58a444" stroke-width="1" opacity="0.28"/><path d="M1552 231L1549 269" fill="none" stroke="#58a444" stroke-width="1" opacity="0.28"/><path d="M1682 125L1682 144" fill="none" stroke="#58a444" stroke-width="1" opacity="0.28"/><path d="M1871 253L1811 268" fill="none" stroke="#58a444" stroke-width="1" opacity="0.28"/><path d="M1804 20L1819 21" fill="none" stroke="#58a444" stroke-width="1" opacity="0.28"/><path d="M1384 59L1383 119" fill="none" stroke="#58a444" stroke-width="1" opacity="0.28"/><path d="M1871 13L1879 29" fill="none" stroke="#58a444" stroke-width="1" opacity="0.28"/><path d="M1683 312L1689 379" fill="none" stroke="#58a444" stroke-width="1" opacity="0.28"/><path d="M1687 312L1747 339" fill="none" stroke="#58a444" stroke-width="1" opacity="0.28"/><path d="M1470 415L1525 423" fill="none" stroke="#58a444" stroke-width="1" opacity="0.28"/><path d="M1576 243L1594 253" fill="none" stroke="#58a444" stroke-width="1" opacity="0.28"/><path d="M1780 543L1734 584" fill="none" stroke="#58a444" stroke-width="1" opacity="0.28"/><path d="M1900 142L1948 169" fill="none" stroke="#58a444" stroke-width="1" opacity="0.28"/><path d="M1688 524L1619 532" fill="none" stroke="#58a444" stroke-width="1" opacity="0.28"/><path d="M1386 507L1394 524" fill="none" stroke="#58a444" stroke-width="1" opacity="0.28"/><path d="M1891 87L1871 123" fill="none" stroke="#58a444" stroke-width="1" opacity="0.28"/><path d="M1720 573L1742 634" fill="none" stroke="#58a444" stroke-width="1" opacity="0.28"/><path d="M1856 351L1804 361" fill="none" stroke="#58a444" stroke-width="1" opacity="0.28"/><path d="M1710 312L1679 345" fill="none" stroke="#58a444" stroke-width="1" opacity="0.28"/><path d="M1644 484L1687 529" fill="none" stroke="#58a444" stroke-width="1" opacity="0.28"/><path d="M1746 99L1784 140" fill="none" stroke="#58a444" stroke-width="1" opacity="0.28"/><path d="M1870 430L1838 462" fill="none" stroke="#58a444" stroke-width="1" opacity="0.28"/><path d="M1725 614L1716 630" fill="none" stroke="#58a444" stroke-width="1" opacity="0.28"/><path d="M1429 625L1458 653" fill="none" stroke="#58a444" stroke-width="1" opacity="0.28"/><path d="M1565 326L1555 345" fill="none" stroke="#58a444" stroke-width="1" opacity="0.28"/><path d="M1893 463L1900 493" fill="none" stroke="#58a444" stroke-width="1" opacity="0.28"/><path d="M1811 578L1836 623" fill="none" stroke="#58a444" stroke-width="1" opacity="0.28"/><path d="M1821 40L1796 68" fill="none" stroke="#58a444" stroke-width="1" opacity="0.28"/><path d="M1783 372L1803 429" fill="none" stroke="#58a444" stroke-width="1" opacity="0.28"/><path d="M1918 224L1935 239" fill="none" stroke="#58a444" stroke-width="1" opacity="0.28"/><path d="M1581 620L1574 634" fill="none" stroke="#58a444" stroke-width="1" opacity="0.28"/><path d="M1486 618L1506 679" fill="none" stroke="#58a444" stroke-width="1" opacity="0.28"/><path d="M1869 387L1869 434" fill="none" stroke="#58a444" stroke-width="1" opacity="0.28"/><path d="M1823 627L1825 654" fill="none" stroke="#58a444" stroke-width="1" opacity="0.28"/><path d="M1439 661L1408 700" fill="none" stroke="#58a444" stroke-width="1" opacity="0.28"/><path d="M1402 199L1354 216" fill="none" stroke="#58a444" stroke-width="1" opacity="0.28"/><path d="M1479 141L1448 167" fill="none" stroke="#58a444" stroke-width="1" opacity="0.28"/><path d="M1498 124L1492 144" fill="none" stroke="#58a444" stroke-width="1" opacity="0.28"/><path d="M1680 562L1743 589" fill="none" stroke="#58a444" stroke-width="1" opacity="0.28"/><path d="M1150 800L1344 800" fill="none" stroke="#3b8a66" stroke-width="1" opacity="0.15"/><path d="M1150 927L1344 927" fill="none" stroke="#3b8a66" stroke-width="1" opacity="0.15"/><path d="M1205 790L1205 990" fill="none" stroke="#3b8a66" stroke-width="1" opacity="0.12"/><path d="M1302 790L1302 990" fill="none" stroke="#3b8a66" stroke-width="1" opacity="0.12"/><path d="M1351 760L1351 1044" fill="none" stroke="#7b7035" stroke-width="1" opacity="0.25"/><path d="M1365 760L1365 1044" fill="none" stroke="#7b7035" stroke-width="1" opacity="0.2"/><circle cx="1322" cy="804" r="12" fill="none" stroke="#7b7035" stroke-width="1" opacity="0.3"/><circle cx="1322" cy="957" r="12" fill="none" stroke="#7b7035" stroke-width="1" opacity="0.3"/><circle cx="1354" cy="856" r="5" fill="none" stroke="#7b7035" stroke-width="1" opacity="0.3"/><circle cx="1354" cy="958" r="5" fill="none" stroke="#7b7035" stroke-width="1" opacity="0.3"/><rect x="1206" y="793" width="96" height="134" fill="none" stroke="#3b8a66" stroke-width="1" opacity="0.12"/></svg></div>

<div id="win">
  <div id="tb">
    <svg class="abs" style="left:0;top:0" width="1344" height="28">
      <circle cx="14" cy="13.6" r="9.2" fill="#1fb6a3"/>
      <path d="M8.2 13.9L11.4 11.7Q14 11 16.4 11.8Q18.3 12.6 18.7 16.2L18.8 18.2L17.3 18.2L16.9 15.7L16.1 18.2L15.4 18.2L15.3 15.6L13.9 15.6L13.8 18.2L12.1 18.2L12 15.3Q10.6 14.3 8.2 13.9Z" fill="#fff"/>
      <path d="M10.2 9.1L12.2 11.6M15.6 9.1L13.1 11.5" stroke="#fff" stroke-width="0.9" fill="none"/>
      <path d="M36.8 13L41.2 8.2L44.4 11.4L39.8 15.9Z" fill="#fff"/>
      <path d="M34.2 12.2L39.9 17.9M33.3 19.1L36.8 15.6" stroke="#fff" stroke-width="1.6" stroke-linecap="round" fill="none"/>
      <path d="M1276.5 11.2L1282 16.8L1287.5 11.2" stroke="#fff" stroke-width="1.3" fill="none"/>
      <path d="M1300.5 16.6L1306 11.1L1311.5 16.6" stroke="#fff" stroke-width="1.3" fill="none"/>
      <circle cx="1330" cy="13.9" r="9.2" fill="#fff"/>
      <path d="M1325.6 9.5L1334.4 18.3M1334.4 9.5L1325.6 18.3" stroke="#31363b" stroke-width="1.2" fill="none"/>
    </svg>
    <div class="t" style="left:654px;top:6px;font-size:12.5px;color:#fff;">YaST2</div>
  </div>

  <div class="t" style="margin-top:0;left:14px;top:46px;font-size:24.3px;line-height:28px;font-weight:bold;transform:scaleX(0.786);transform-origin:0 0;">Filesystem Options</div>

  <div class="t" style="left:556px;top:260px;">Settings for the Root Partition</div>
  <div class="t" style="left:572px;top:286px;"><u>F</u>ile System Type</div>
  <div class="abs" style="left:572px;top:307px;width:98px;height:32px;background:#73b825;border-radius:3px;"></div>
  <div class="t" style="left:586px;top:315px;color:#fff;transform:scaleX(0.93);transform-origin:0 0;">Ext4</div>
  <div class="abs" style="left:653px;top:321px;width:0;height:0;border-left:4px solid transparent;border-right:4px solid transparent;border-top:4px solid #31363b;"></div>
  <div class="abs" style="left:568px;top:346px;width:14px;height:14px;border-radius:2px;background:#a9d68c;"><svg width="14" height="14" style="position:absolute;left:0;top:0"><path d="M3 7.2L5.8 10L11.2 4.4" fill="none" stroke="#dcefcf" stroke-width="2"/></svg></div>
  <div class="t dis" style="left:588px;top:345px;"><u>E</u>nable Snapshots</div>

  <div class="cb" style="left:552px;top:393px;"></div>
  <div class="t" style="left:572px;top:392px;">P<u>r</u>opose Separate Home Partition</div>
  <div class="t dis" style="left:572px;top:415px;">F<u>i</u>le System Type</div>
  <div class="abs" style="left:572px;top:436px;width:96px;height:30px;border:1px solid #bcbcbc;border-radius:3px;"></div>
  <div class="t" style="left:585px;top:444px;color:#b0b2b4;transform:scaleX(0.85);transform-origin:0 0;">XFS</div>
  <div class="abs" style="left:653px;top:450px;width:0;height:0;border-left:4px solid transparent;border-right:4px solid transparent;border-top:4px solid #31363b;"></div>

  <div class="abs" style="left:552px;top:502px;width:14px;height:14px;border-radius:2px;background:#73b825;"><svg width="14" height="14" style="position:absolute;left:0;top:0"><path d="M3 7.2L5.8 10L11.2 4.4" fill="none" stroke="#fff" stroke-width="2"/></svg></div>
  <div class="t" style="left:572px;top:501px;"><u>P</u>ropose Separate Swap Partition</div>
  <div class="cb" style="left:568px;top:522px;"></div>
  <div class="t" style="left:589px;top:521px;font-size:12.6px;">Enl<u>a</u>rge to RAM Size for Suspend</div>

  <div class="btn" style="left:13px;width:64px;"></div>
  <div class="t" style="left:33px;top:724px;"><u>H</u>elp</div>
  <div class="btn" style="left:89px;width:116px;"></div>
  <div class="t" style="left:102px;top:724px;">Re<u>l</u>ease Notes...</div>
  <div class="btn" style="left:1118px;width:64px;"></div>
  <div class="t" style="left:1131px;top:724px;"><u>C</u>ancel</div>
  <div class="btn" style="left:1194px;width:64px;"></div>
  <div class="t" style="left:1212px;top:724px;"><u>B</u>ack</div>
  <div class="btn" style="left:1265px;width:64px;background:#73b825;border-color:#73b825;"></div>
  <div class="t" style="left:1285px;top:724px;color:#fff;"><u>N</u>ext</div>
</div>

<div id="panel" class="abs" style="left:0;top:1044px;width:1920px;height:36px;background:#dee9e9;">
  <div class="abs" style="left:0;top:0;width:1920px;height:1px;background:#e8f1f1;"></div>
  <div class="abs" style="left:71px;top:2px;width:257px;height:32px;background:#abd8ec;"></div>
  <div class="abs" style="left:71px;top:2px;width:257px;height:3px;background:#63bbe7;"></div>
  <div class="t" style="left:104px;top:10px;font-size:12px;line-height:16px;color:#232627;">YaST2</div>
  <div class="t" style="left:1788px;top:6px;font-size:22.4px;line-height:26px;color:#232627;">3:13 PM</div>
  <svg class="abs" style="left:0;top:0" width="1920" height="36">
    <circle cx="18" cy="18" r="15.2" fill="none" stroke="#232627" stroke-width="2"/>
    <clipPath id="lc"><circle cx="18" cy="18" r="15"/></clipPath>
    <path clip-path="url(#lc)" d="M0 8.2L7.8 8.1L9.6 9.4Q12 8.6 14.2 9.2Q21 8.4 25.2 11.6Q28.9 14.5 28.9 18.6L28.9 22.6Q26.5 25 22 25.6L9 27.5L0 27.6Z" fill="#232627"/>
    <circle cx="21.9" cy="15.5" r="3.5" fill="none" stroke="#dfe8e9" stroke-width="1.3"/>
    <circle cx="22.1" cy="14.9" r="1.2" fill="#dfe8e9"/>
    <path d="M12.6 17.4Q19 22.6 28.8 22" fill="none" stroke="#dfe8e9" stroke-width="1.4"/>
    <rect x="38" y="2" width="26" height="15" fill="#7ec8ea"/>
    <rect x="38.5" y="2.5" width="17.5" height="10.5" fill="#559ac2" stroke="#2d6f9b" stroke-width="1"/>
    <rect x="38" y="18" width="26" height="15" fill="#d0d9da"/>
    <circle cx="86.9" cy="17.7" r="9.9" fill="#1fb6a3"/>
    <g transform="translate(86.9,17.7) scale(1.05)"><path d="M-5.8 0.3L-2.6 -1.9Q0 -2.6 2.4 -1.8Q4.3 -1 4.7 2.6L4.8 4.6L3.3 4.6L2.9 2.1L2.1 4.6L1.4 4.6L1.3 2L-0.1 2L-0.2 4.6L-1.9 4.6L-2 1.7Q-3.4 0.7 -5.8 0.3Z" fill="#fff"/><path d="M-3.8 -4.5L-1.8 -2M1.6 -4.5L-0.9 -2.1" stroke="#fff" stroke-width="0.9" fill="none"/></g>
    <circle cx="1610" cy="18" r="7.6" fill="none" stroke="#232627" stroke-width="1.1" stroke-dasharray="20 1.8"/>
    <path d="M1606.2 16.5L1610 13.2L1613.7 16.5L1611.7 16.5L1611.7 21.5L1608.3 21.5L1608.3 16.5Z" fill="#232627"/>
    <circle cx="1615" cy="23" r="3.1" fill="#da4453"/>
    <rect x="1629.6" y="12.6" width="13" height="13.3" fill="none" stroke="#232627" stroke-width="1.1"/>
    <rect x="1631.4" y="10" width="9.6" height="4.4" fill="#232627"/>
    <path d="M1632.2 16.3h7.6M1632.2 19.4h5.5M1632.2 22.3h2.6" stroke="#232627" stroke-width="0.9"/>
    <rect x="1654.1" y="15" width="1.7" height="5.9" fill="#232627"/>
    <path d="M1657.2 15L1662.9 10L1662.9 25.9L1657.2 20.9Z" fill="#232627"/>
    <path d="M1665 14.5A4.5 4.5 0 0 1 1665 21.5" fill="none" stroke="#232627" stroke-width="1"/>
    <path d="M1666.5 10.5A8 8 0 0 1 1666.5 25.5" fill="none" stroke="#9aa0a2" stroke-width="0.8"/>
    <path d="M1683 13.2L1692.8 21.3L1688.5 25.7L1688.5 10.2L1692.8 14L1683 22.1" fill="none" stroke="#232627" stroke-width="1"/>
    <rect x="1710.6" y="10.6" width="6.6" height="6.6" fill="none" stroke="#232627" stroke-width="1.2"/>
    <rect x="1710.1" y="10.1" width="7.6" height="1.3" fill="#232627"/>
    <rect x="1713.2" y="13.4" width="1.4" height="1.4" fill="#232627"/>
    <rect x="1709.8" y="18" width="8.6" height="7.4" fill="none" stroke="#232627" stroke-width="1"/>
    <path d="M1711.3 23.2h5.6" stroke="#232627" stroke-width="1"/>
    <rect x="1732.8" y="10.6" width="3.3" height="4.6" fill="none" stroke="#232627" stroke-width="1"/>
    <path d="M1738 10.7H1747.4V22.5H1737.2M1734.4 15.4V23.5Q1734.4 25.2 1737 25.2M1732.8 17V22.5" fill="none" stroke="#232627" stroke-width="1"/>
    <rect x="1736.8" y="21.5" width="11" height="1.6" fill="#232627"/>
    <rect x="1739.5" y="22.8" width="3" height="2.2" fill="#232627"/>
    <path d="M1737.5 25.2H1743.8" stroke="#232627" stroke-width="1"/>
    <path d="M1760.2 20.8L1765.9 15.1L1771.6 20.8Z" fill="#232627"/>
    <rect x="1890.7" y="6.8" width="22.6" height="22.6" fill="none" stroke="#232627" stroke-width="1.3"/>
    <path d="M1893.4 26.6H1910.9" stroke="#232627" stroke-width="1"/>
  </svg>
</div>
</body></html>
